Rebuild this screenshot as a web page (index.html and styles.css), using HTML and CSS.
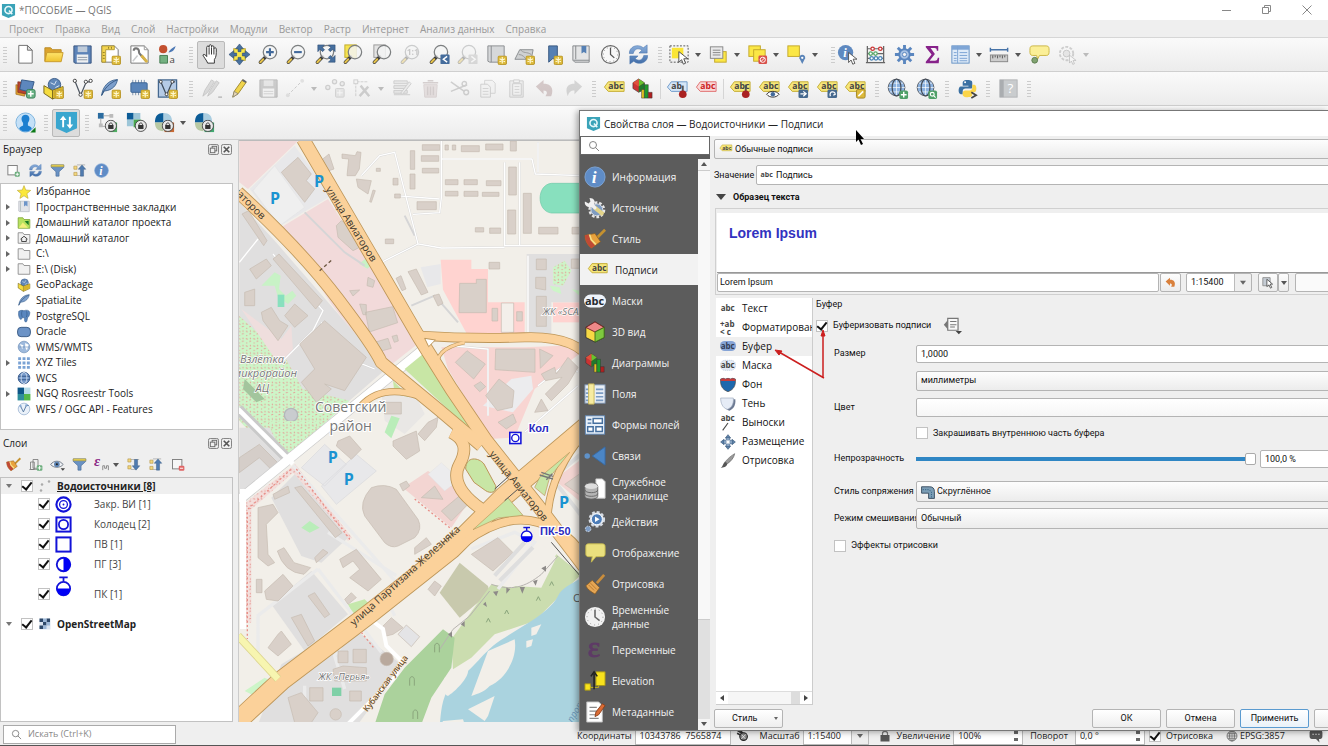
FILE: index.html
```html
<!DOCTYPE html>
<html lang="ru">
<head>
<meta charset="utf-8">
<title>*ПОСОБИЕ — QGIS</title>
<link rel="stylesheet" href="styles.css">
</head>
<body>
<svg class="paints" aria-hidden="true">
  <defs>
    <linearGradient id="blueG" x1="0" y1="0" x2="0" y2="1"><stop offset="0" stop-color="#8cb0dd"/><stop offset="1" stop-color="#3f6ba6"/></linearGradient>
    <linearGradient id="yelG" x1="0" y1="0" x2="0" y2="1"><stop offset="0" stop-color="#ffe46b"/><stop offset="1" stop-color="#eec22f"/></linearGradient>
    <pattern id="dots" width="22" height="22" patternUnits="userSpaceOnUse"><path d="M2 4l5 3M12 14l5-2M14 2l2 4M3 17l3 2" stroke="#e59a94" stroke-width="3"/></pattern>
  </defs>
</svg>
<svg class="sprite" aria-hidden="true">
  <symbol id="b-new" viewBox="0 0 10 10"><rect x=".5" y=".5" width="9" height="9" rx="1.5" fill="#dcb93a" stroke="#b8952a"/><path d="M5 1.700v6.600M2.200 3.400l5.600 3.200M7.800 3.400L2.200 6.600" stroke="#fff8cf" stroke-width="1.200"/></symbol>
  <symbol id="mag" viewBox="0 0 24 24"><path d="M9 14.500L3.500 20" stroke="#3c3c3c" stroke-width="3.600" stroke-linecap="round"/><path d="M6.500 17L3.500 20" stroke="#e5c24b" stroke-width="2.200" stroke-linecap="round"/><circle cx="13.500" cy="9.500" r="7" fill="#f3f4f4" fill-opacity=".85" stroke="#7c7f80" stroke-width="1.300"/></symbol>
  <symbol id="q" viewBox="0 0 16 16"><path d="M1 1h14v12l-7 3-7-3z" fill="#3aa3b8"/><circle cx="8" cy="7.500" r="3.800" fill="none" stroke="#e8f8fa" stroke-width="1.700"/><path d="M8.500 8l3.500 4" stroke="#e8f8fa" stroke-width="1.700"/></symbol>
  <symbol id="t-new" viewBox="0 0 24 24"><path d="M5 2.500h9l5 5V21H5z" fill="#fff" stroke="#707070"/><path d="M14 2.500v5h5z" fill="#ddd" stroke="#707070"/></symbol>
  <symbol id="t-open" viewBox="0 0 24 24"><path d="M3 19V5h6l2 2h9v3" fill="#dca32d" stroke="#b98a27"/><path d="M3 19.500L5 10h17l-2 9.500z" fill="url(#yelG)" stroke="#c99b2e"/></symbol>
  <symbol id="t-save" viewBox="0 0 24 24"><path d="M3 3h18v18H4l-1-1z" fill="#5c83b8" stroke="#38557e"/><path d="M7 3.500h10v6H7z" fill="#bfcbd9"/><path d="M6 12h12v8.500H6z" fill="#eef0f2"/><path d="M7 15h10M7 17.500h10" stroke="#8a96a6"/></symbol>
  <symbol id="t-layout" viewBox="0 0 24 24"><path d="M3 3h13l4 4v13H3z" fill="#fff" stroke="#777"/><path d="M3 3h13v4H7v13H3z" fill="#f3d451" stroke="#a58c24" stroke-width=".8"/><path d="M10 4v2M13 4v2M4 10h2M4 13h2M4 16h2" stroke="#7a6816" stroke-width=".8"/><use href="#b-new" x="13" y="13" width="10" height="10"/></symbol>
  <symbol id="t-manager" viewBox="0 0 24 24"><path d="M3 3h14l4 4v14H3z" fill="#fff" stroke="#777"/><path d="M17 3v4h4" fill="none" stroke="#999"/><path d="M6 8c0-3 4-3 5-1 1 2 0 3 1 4l7 8" fill="none" stroke="#777" stroke-width="2.200"/><path d="M14 13l6 7" stroke="#d8b347" stroke-width="3"/><path d="M5 19l5-6" stroke="#c9cbcd" stroke-width="1.500"/></symbol>
  <symbol id="t-style" viewBox="0 0 24 24"><circle cx="7.500" cy="6.500" r="4.300" fill="#c3502f"/><path d="M13 10c1-3 4-5 7.500-7-1 4-3 6-7.500 7z" fill="#4d79b5"/><path d="M4 13h8v8H4z" fill="#74b181" stroke="#477d53"/><text x="14" y="21" font-size="10" font-family="Open Sans" fill="#444">a</text></symbol>
  <symbol id="t-hand" viewBox="0 0 24 24"><path d="M8 21c-1-3-4-6-5-8.500 1-1.500 3 0 4 1.700V4.500c0-1.800 2.400-1.800 2.500 0V3c.2-1.700 2.300-1.700 2.500 0v1c.3-1.500 2.400-1.500 2.500 0v2c.4-1.500 2.500-1.300 2.500.3 0 5 .2 8-2 11v3.700z" fill="#fff" stroke="#333"/><path d="M9.500 5v7M12 4.500V12M14.500 6v6" stroke="#333" fill="none"/></symbol>
  <symbol id="t-pansel" viewBox="0 0 24 24"><rect x="6" y="6" width="12" height="12" fill="#f7e54b" stroke="#b9a22c"/><path d="M12 1l4 5h-2.500v3h-3V6H8zM12 23l4-5h-2.500v-3h-3v3H8zM1 12l5-4v2.500h3v3H6V16zM23 12l-5-4v2.500h-3v3h3V16z" fill="#47719f" stroke="#2c4a70" stroke-width=".6"/></symbol>
  <symbol id="t-zin" viewBox="0 0 24 24"><use href="#mag" width="24" height="24"/><path d="M13.500 5.500v8M9.500 9.500h8" stroke="#41699b" stroke-width="2.200"/></symbol>
  <symbol id="t-zout" viewBox="0 0 24 24"><use href="#mag" width="24" height="24"/><path d="M9.500 9.500h8" stroke="#41699b" stroke-width="2.200"/></symbol>
  <symbol id="t-zfull" viewBox="0 0 24 24"><use href="#mag" width="24" height="24"/><path d="M4 2h7L8.500 4.500l2.500 2.500L9 9 6.500 6.500 4 9zM22 2h-7l2.500 2.500L15 7l2 2 2.500-2.500L22 9zM22 20h-7l2.500-2.500L15 15l2-2 2.500 2.500L22 13z" fill="#466f9f" stroke="#2e4b70" stroke-width=".6"/></symbol>
  <symbol id="t-zsel" viewBox="0 0 24 24"><rect x="3" y="2" width="12" height="13" fill="#f5e34f" stroke="#c0ab2c"/><use href="#mag" width="24" height="24"/></symbol>
  <symbol id="t-zlayer" viewBox="0 0 24 24"><rect x="3" y="2" width="12" height="13" fill="#e3e3e3" stroke="#999"/><use href="#mag" width="24" height="24"/></symbol>
  <symbol id="t-znat" viewBox="0 0 24 24"><use href="#mag" width="24" height="24"/><text x="8" y="13" font-size="9" font-weight="700" font-family="Open Sans" fill="#777">1:1</text></symbol>
  <symbol id="t-zlast" viewBox="0 0 24 24"><use href="#mag" width="24" height="24"/><rect x="13" y="12" width="9.500" height="10" rx="1" fill="#446c9c"/><path d="M20 14l-4 3 4 3" stroke="#fff" fill="none" stroke-width="1.500"/></symbol>
  <symbol id="t-znext" viewBox="0 0 24 24"><use href="#mag" width="24" height="24"/><rect x="13" y="12" width="9.500" height="10" rx="1" fill="#aaa"/><path d="M16 14l4 3-4 3" stroke="#fff" fill="none" stroke-width="1.500"/></symbol>
  <symbol id="t-map" viewBox="0 0 24 24"><path d="M3 3h17v17H5l-2-1z" fill="#d6d8da" stroke="#8a8d90"/><path d="M6.500 3v17" stroke="#8a8d90"/><use href="#b-new" x="13" y="13" width="10" height="10"/></symbol>
  <symbol id="t-map3d" viewBox="0 0 24 24"><path d="M2 17L7 7h14l-2 10z" fill="#cfd1d2" stroke="#8a8d90"/><path d="M8 7c2 4 7 2 11 5M6 12c4 0 6 3 8 5" fill="none" stroke="#999"/><use href="#b-new" x="13" y="13" width="10" height="10"/></symbol>
  <symbol id="t-bmark" viewBox="0 0 24 24"><path d="M7 3h9v17l-4.500-4L7 20z" fill="#5580b4" stroke="#37587f"/><use href="#b-new" x="12" y="13" width="10" height="10"/></symbol>
  <symbol id="t-book" viewBox="0 0 24 24"><path d="M3 3h17v17H5l-2-2z" fill="#e4e5e6" stroke="#85888b"/><path d="M6 3v14M3.500 18H20" stroke="#85888b" fill="none"/><path d="M12 3h5v8l-2.500-1.500L12 11z" fill="#5580b4"/></symbol>
  <symbol id="t-clock" viewBox="0 0 24 24"><circle cx="12" cy="12" r="9.300" fill="#f8f8f8" stroke="#666" stroke-width="1.200"/><path d="M12 5v7l4 3.500" stroke="#555" fill="none" stroke-width="1.300"/><circle cx="12" cy="12" r="7.500" fill="none" stroke="#888" stroke-dasharray="1 2.900"/></symbol>
  <symbol id="t-refresh" viewBox="0 0 24 24"><path d="M2.500 11C2 4 11 0 17 5l4-3v8.500h-8.500L15.500 7.500c-4-3-8-1-9 3.500zM21.500 13C22 20 13 24 7 19l-4 3v-8.500h8.500L8.500 16.500c4 3 8 1 9-3.500z" fill="url(#blueG)" stroke="#4b76af" stroke-width=".6"/></symbol>
  <symbol id="cur" viewBox="0 0 12 16"><path d="M1 1v12l3-3 2 5 2.500-1-2-5H11z" fill="#fff" stroke="#444"/></symbol>
  <symbol id="t-select" viewBox="0 0 24 24"><rect x="2" y="3" width="19" height="17" fill="none" stroke="#555" stroke-dasharray="2 1.500"/><rect x="4" y="5" width="12" height="11" fill="#fae536"/><use href="#cur" x="10" y="8" width="12" height="15"/></symbol>
  <symbol id="t-form" viewBox="0 0 24 24"><rect x="8" y="9" width="12" height="11" fill="#fbe746" stroke="#c4a92c"/><rect x="3.500" y="4" width="13" height="12" fill="#e9e9ea" stroke="#888"/><path d="M6 7.500h8M6 10h8M6 12.500h8" stroke="#888"/></symbol>
  <symbol id="t-desel" viewBox="0 0 24 24"><rect x="3" y="3" width="12" height="11" fill="#fbe746" stroke="#c4a92c"/><rect x="8" y="7" width="12" height="12" fill="#fbe746" stroke="#c4a92c"/><rect x="13" y="13" width="9" height="9" rx="1.500" fill="#d8504a"/><circle cx="17.500" cy="17.500" r="2.700" fill="none" stroke="#fff"/><path d="M15.500 19.500l4-4" stroke="#fff"/></symbol>
  <symbol id="t-selloc" viewBox="0 0 24 24"><rect x="3" y="3" width="12" height="11" fill="#fbe746" stroke="#c4a92c"/><path d="M18 22l-3-6c-1-5 7-5 6 0z" fill="#5a84b8"/><circle cx="18" cy="15.500" r="1.200" fill="#fff"/></symbol>
  <symbol id="t-info" viewBox="0 0 24 24"><circle cx="10" cy="10" r="8" fill="#5e89c0"/><text x="7.500" y="15" font-size="13" font-weight="700" font-style="italic" font-family="Liberation Serif" fill="#fff">i</text><use href="#cur" x="12" y="9" width="11" height="14"/></symbol>
  <symbol id="t-abacus" viewBox="0 0 24 24"><path d="M3.500 3v18M20.500 3v18M2 20.500h20M3 6h18M3 11h18M3 16h18" stroke="#666" stroke-width="1.300"/><g fill="#fff" stroke-width="1.300"><g stroke="#cc3333"><circle cx="9" cy="6" r="1.800"/><circle cx="17" cy="6" r="1.800"/></g><g stroke="#55a868"><circle cx="7" cy="11" r="1.800"/><circle cx="12" cy="11" r="1.800"/></g><g stroke="#4a86b8"><circle cx="8" cy="16" r="1.800"/><circle cx="12.500" cy="16" r="1.800"/><circle cx="17" cy="16" r="1.800"/></g></g></symbol>
  <symbol id="t-gear" viewBox="0 0 24 24"><path d="M12 2v20M2 12h20M5 5l14 14M19 5L5 19" stroke="#5a86bf" stroke-width="3"/><circle cx="12" cy="12" r="5.500" fill="#a9c3e5" stroke="#5a86bf" stroke-width="2"/><circle cx="12" cy="12" r="2.200" fill="#f4f4f4" stroke="#5a86bf"/></symbol>
  <symbol id="t-sum" viewBox="0 0 24 24"><path d="M5 3h13v5h-1.500c0-2-.8-2.700-2.500-2.700h-4l4.500 6.200-5.500 7h5.500c2 0 2.700-1 3-3H19L18.500 21H5v-1.500L11 12 5 4.500z" fill="#87228a"/></symbol>
  <symbol id="t-table" viewBox="0 0 24 24"><rect x="3" y="3" width="18" height="18" fill="#dfebf8" stroke="#6490c4"/><path d="M3 3h18v4H3z" fill="#7fa6d6"/><path d="M9 3v18M5 10h3M5 13h3M5 16h3M11 10h8M11 13h8M11 16h8M5 18.500h3M11 18.500h8" stroke="#7ba3d3"/></symbol>
  <symbol id="t-measure" viewBox="0 0 24 24"><path d="M2 7h19M2.500 5v4M20.500 5v4" stroke="#4773a8" stroke-width="1.500"/><rect x="2.500" y="12.500" width="18" height="7" fill="#cdcdcd" stroke="#888"/><path d="M5 13v3M7.500 13v2M10 13v3M12.500 13v2M15 13v3M17.500 13v2" stroke="#555"/></symbol>
  <symbol id="t-tip" viewBox="0 0 24 24"><path d="M5 3h14c3 0 3 2 3 5s0 5-3 5h-7l-2 4-1-4H5c-3 0-3-2-3-5s0-5 3-5z" fill="#fbef97" stroke="#cbb645"/><circle cx="7" cy="18" r="3" fill="#81a371" stroke="#5d7c4f"/></symbol>
  <symbol id="t-ghost" viewBox="0 0 24 24"><circle cx="11" cy="11" r="7" fill="none" stroke="#888" stroke-width="2" stroke-dasharray="3 1.500"/><circle cx="11" cy="11" r="3.500" fill="#ccc" stroke="#777"/><use href="#cur" x="13" y="12" width="9" height="11"/></symbol>
  <symbol id="u-add" viewBox="0 0 24 24"><path d="M2 8l11 2-2 10-9-2z" fill="#e0a030" stroke="#9a6a20" stroke-width=".7"/><path d="M4 5l11 1-1 12L4 16z" fill="#b8442f" stroke="#7c2d1e" stroke-width=".7"/><path d="M8 3l13 2-3 11-12-3z" fill="#5d87bd" stroke="#345987"/><rect x="13" y="13" width="9" height="9" rx="2" fill="#6cb487" stroke="#3c8159"/><path d="M17.500 14.500v6M14.500 17.500h6" stroke="#fff" stroke-width="1.500"/></symbol>
  <symbol id="u-gpkg" viewBox="0 0 24 24"><circle cx="13" cy="8" r="6.500" fill="#6087b8" stroke="#3e5f8b"/><path d="M9 6l4 2 2-4M14 11l4-2" stroke="#dce8f5" fill="none"/><path d="M2 9l9 5 11-4v8l-11 5-9-6z" fill="#f5dc3f" stroke="#75651c"/><path d="M11 14v9" stroke="#75651c"/><path d="M11.500 14l10-3.500v7l-10 4.500z" fill="#d8b52f"/></symbol>
  <symbol id="u-gpkgn" viewBox="0 0 24 24"><use href="#u-gpkg" width="24" height="24"/><use href="#b-new" x="13" y="13" width="10" height="10"/></symbol>
  <symbol id="u-v" viewBox="0 0 24 24"><path d="M4 4l6 15 6-14h4" stroke="#4c5560" fill="none" stroke-width="1.300"/><g fill="#fff" stroke="#444"><circle cx="4" cy="4" r="1.700"/><circle cx="10" cy="18.500" r="1.700"/><circle cx="15.500" cy="5" r="1.700"/><circle cx="20.500" cy="4" r="1.700"/></g><use href="#b-new" x="13" y="13" width="10" height="10"/></symbol>
  <symbol id="feather" viewBox="0 0 24 24"><path d="M3 21c1-10 8-18 18-18-1 6-5 12-15 13z" fill="#7d9fcb" stroke="#3e648f"/><path d="M3 21C6 13 12 7 21 3" stroke="#31557f" fill="none"/></symbol>
  <symbol id="u-feather" viewBox="0 0 24 24"><use href="#feather" width="22" height="22"/><use href="#b-new" x="13" y="13" width="10" height="10"/></symbol>
  <symbol id="u-chip" viewBox="0 0 24 24"><path d="M5 3v16M8 3v16M11 3v16M14 3v16M17 3v16" stroke="#7d93ae"/><rect x="3" y="6" width="17" height="10" rx="1" fill="#5984b9" stroke="#3e6594"/><use href="#b-new" x="13" y="13" width="10" height="10"/></symbol>
  <symbol id="u-vbox" viewBox="0 0 24 24"><rect x="2.500" y="3" width="19" height="18" fill="#b5cbe6" stroke="#45688f" stroke-width="1.300"/><path d="M5 5l6 14 6-14h3" stroke="#3c4a5a" fill="none" stroke-width="1.300"/><g fill="#fff" stroke="#444"><circle cx="5" cy="5" r="1.500"/><circle cx="11" cy="18" r="1.500"/><circle cx="17" cy="5" r="1.500"/></g><use href="#b-new" x="13" y="13" width="10" height="10"/></symbol>
  <symbol id="u-pencils" viewBox="0 0 24 24"><path d="M3 20l2-6L12 3l3 2-7 11zM8 20l2-5 7-11 3 2-7 10z" fill="#aaa" stroke="#777"/><path d="M19 21h4" stroke="#555" stroke-width="1.500"/></symbol>
  <symbol id="u-pencil" viewBox="0 0 24 24"><path d="M5 21l1.500-6L15 3l4 2.500-8.500 12z" fill="#f0d44c" stroke="#a18a2a"/><path d="M5 21l1.500-6 4 2.500z" fill="#e9d7b3" stroke="#777" stroke-width=".7"/><path d="M15 3l4 2.500" stroke="#666" stroke-width="2"/></symbol>
  <symbol id="u-line" viewBox="0 0 24 24"><path d="M4 19L19 4" stroke="#777" stroke-dasharray="3 2"/><circle cx="4" cy="19" r="2" fill="#bbb"/><circle cx="19" cy="4" r="2" fill="#bbb"/></symbol>
  <symbol id="u-points" viewBox="0 0 24 24"><g fill="#ddd" stroke="#888" stroke-width="1.300"><circle cx="4" cy="11" r="2.200"/><circle cx="11" cy="5" r="2.200"/><circle cx="19" cy="7" r="2.200"/></g><rect x="12" y="12" width="9" height="9" rx="1" fill="#ccc" stroke="#999"/><path d="M16.500 13.500v6M13.500 16.500h6" stroke="#fff"/></symbol>
  <symbol id="u-vertex" viewBox="0 0 24 24"><path d="M5 20V5h12" stroke="#888" fill="none" stroke-dasharray="3 1"/><rect x="3" y="3" width="4" height="4" fill="#eee" stroke="#888"/><path d="M9 20l9-10M10 9l9 11" stroke="#888" stroke-width="2.500"/></symbol>
  <symbol id="u-tedit" viewBox="0 0 24 24"><path d="M3 4h14v3H3zM3 9h14v3H3zM3 14h14v3H3zM3 18.500h17" fill="#ccc" stroke="#888"/><path d="M10 17L19 5l2 2-9 11z" fill="#ddd" stroke="#888"/></symbol>
  <symbol id="u-trash" viewBox="0 0 24 24"><path d="M5 8h14l-1 13H6z" fill="#cbb" stroke="#a99"/><path d="M4 6h16M9 4h6M9 10v9M12 10v9M15 10v9" stroke="#988" stroke-width="1.500"/></symbol>
  <symbol id="u-cut" viewBox="0 0 24 24"><path d="M3 5l14 10M3 15l17-7" stroke="#888" stroke-width="1.600"/><circle cx="19" cy="16" r="2.500" fill="none" stroke="#888" stroke-width="1.500"/><circle cx="17" cy="7" r="2.300" fill="none" stroke="#888" stroke-width="1.500"/></symbol>
  <symbol id="u-copy" viewBox="0 0 24 24"><path d="M9 3.500h8l3 3V17H9z" fill="#eee" stroke="#999"/><path d="M5 7.500h7l3 3V21H5z" fill="#eee" stroke="#888"/><path d="M7 12h6M7 15h6M7 18h6" stroke="#999"/></symbol>
  <symbol id="u-paste" viewBox="0 0 24 24"><path d="M5 4h14v17H5z" fill="#ddd" stroke="#888"/><path d="M8 7h9v12H8zM9 3h6v3H9z" fill="#eee" stroke="#888"/><path d="M10 10h5M10 13h5M10 16h5" stroke="#999"/></symbol>
  <symbol id="undo" viewBox="0 0 24 24"><path d="M3 10l8-7v4c8 0 11 5 8 13h-6c3-4 1-6-2-6v4z" fill="currentColor"/></symbol>
  <symbol id="u-redo" viewBox="0 0 24 24"><path d="M21 10l-8-7v4C5 7 3 12 6 20c1-4 3-6 7-6v4z" fill="#999"/></symbol>
  <symbol id="tag" viewBox="0 0 24 24"><path d="M1.500 10.500L5.500 5H22v10H5.500z" fill="#f6e77a" stroke="#c4ac35"/><text x="5.500" y="13" font-size="9" font-weight="700" font-family="Open Sans" fill="#444">abc</text></symbol>
  <symbol id="u-tagblue" viewBox="0 0 24 24"><path d="M1.500 10.500L5.500 5H22v10H5.500z" fill="#d5e6f8" stroke="#6f9bcb"/><text x="5.500" y="13" font-size="9" font-weight="700" font-family="Open Sans" fill="#444">ab</text><path d="M17.500 9v6" stroke="#555" stroke-width="2"/><circle cx="17.500" cy="18" r="4" fill="#aa2222"/></symbol>
  <symbol id="u-tagred" viewBox="0 0 24 24"><path d="M1.500 10.500L5.500 5H22v10H5.500z" fill="#f9d8d8" stroke="#e07070"/><text x="5.500" y="13" font-size="9" font-weight="700" font-family="Open Sans" fill="#cc2222">abc</text></symbol>
  <symbol id="u-tagpin" viewBox="0 0 24 24"><use href="#tag" width="24" height="24"/><path d="M17.500 8v7" stroke="#555" stroke-width="2"/><circle cx="17.500" cy="18" r="4" fill="#aa2222"/></symbol>
  <symbol id="u-tageye" viewBox="0 0 24 24"><use href="#tag" width="24" height="24"/><path d="M9 18c3-4 10-4 13 0-3 4-10 4-13 0z" fill="#fff" stroke="#333"/><circle cx="15.500" cy="18" r="2.300" fill="#446c9c"/></symbol>
  <symbol id="u-tagmove" viewBox="0 0 24 24"><use href="#tag" width="24" height="24"/><rect x="12" y="13" width="10" height="9" rx="1.500" fill="#476a8f"/><path d="M14 17.500h5M17 15l3 2.500-3 2.500" stroke="#fff" stroke-width="1.300" fill="none"/></symbol>
  <symbol id="u-tagrot" viewBox="0 0 24 24"><use href="#tag" width="24" height="24"/><rect x="12" y="13" width="10" height="9" rx="1.500" fill="#476a8f"/><path d="M15 20c-2-5 5-6 5-2l-2 1" stroke="#fff" stroke-width="1.300" fill="none"/></symbol>
  <symbol id="u-tagedit" viewBox="0 0 24 24"><use href="#tag" width="24" height="24"/><rect x="13" y="13" width="9" height="9" rx="1.500" fill="#dcb93a" stroke="#a48826"/><path d="M15 20l5-5" stroke="#fff" stroke-width="1.600"/></symbol>
  <symbol id="diag" viewBox="0 0 24 24"><path d="M2 6l6-4 6 4v7l-6 3-6-4z" fill="#cc3333" stroke="#333" stroke-width=".6"/><path d="M8 2l6 4-6 4z" fill="#66c42e"/><path d="M2 6l6-4v8z" fill="#e0503c"/><path d="M8 10l6-4v7l-6 3z" fill="#207a2c"/><path d="M11 13h3v9h-3z" fill="#e0c020" stroke="#333" stroke-width=".5"/><path d="M14 8h4v14h-4z" fill="#209a2c" stroke="#333" stroke-width=".5"/><path d="M18 16h4v6h-4z" fill="#b02020" stroke="#333" stroke-width=".5"/></symbol>
  <symbol id="globe" viewBox="0 0 24 24"><circle cx="12" cy="12" r="9.500" fill="#8cb2e0" stroke="#50565e"/><path d="M12 2.500v19M2.500 12h19M4.500 7h15M4.500 17h15" stroke="#fff" fill="none" stroke-width=".8"/><ellipse cx="12" cy="12" rx="5" ry="9.500" fill="none" stroke="#444b55" stroke-width="1.400"/></symbol>
  <symbol id="u-globeadd" viewBox="0 0 24 24"><use href="#globe" width="22" height="22"/><rect x="14" y="14" width="9" height="9" rx="2" fill="#4f9f67"/><path d="M18.500 15.500v6M15.500 18.500h6" stroke="#fff" stroke-width="1.500"/></symbol>
  <symbol id="u-globefind" viewBox="0 0 24 24"><use href="#globe" width="22" height="22"/><rect x="14" y="14" width="9" height="9" rx="2" fill="#4f9f67"/><circle cx="18" cy="18" r="2" fill="none" stroke="#fff" stroke-width="1.200"/><path d="M19.500 19.500l2 2" stroke="#fff" stroke-width="1.200"/></symbol>
  <symbol id="u-py" viewBox="0 0 24 24"><path d="M12 3c-5 0-5 2-5 4v2h6v1H5c-3 0-3 8 0 8h2v-3c0-2 1-3 3-3h5c2 0 2-1 2-3V6c0-2-1-3-5-3z" fill="#3b70a2"/><path d="M17 8v3c0 2-1 3-3 3h-4c-2 0-3 1-3 3v2c1 2 3 2 5 2 4 0 5-1 5-3v-2h2c3 0 3-8 0-8z" fill="#fbd54a"/><circle cx="9.500" cy="5.500" r="1" fill="#fff"/><path d="M16 16l5 3-5 3" stroke="#444" fill="none" stroke-width="1.800"/></symbol>
  <symbol id="u-help" viewBox="0 0 24 24"><rect x="3" y="3" width="18" height="18" fill="#c9ccce" stroke="#b2b4b6"/><path d="M3 3h4v18H3z" fill="#aaadb0"/><text x="11" y="17" font-size="14" font-family="Open Sans" fill="#fff">?</text></symbol>
  <symbol id="w-user" viewBox="0 0 24 24"><circle cx="12" cy="12" r="10" fill="#c4e0f7" stroke="#7fb5de"/><path d="M12 4c5 0 5 6 2.500 8.500V15c2.500 1 4 2 4 3.500-3 4-10 4-13 0 0-1.500 1.500-2.500 4-3.500v-2.500C7 10 7 4 12 4z" fill="#1c7fd0"/><path d="M22.500 17v5.500H17z" fill="#0c7a18"/></symbol>
  <symbol id="w-shield" viewBox="0 0 24 24"><path d="M1 1h22v17l-11 5-11-5z" fill="#3aa6cf"/><path d="M8.500 17V7M15.500 6v10" stroke="#fff" stroke-width="2"/><path d="M5 9.500L8.500 5 12 9.500zM12 14l3.500 4.500L19 14z" fill="#fff"/></symbol>
  <symbol id="lockb" viewBox="0 0 14 14"><circle cx="7" cy="7" r="6.300" fill="#e8e8e8" stroke="#444"/><rect x="4" y="6" width="6" height="4.500" fill="#333"/><path d="M5 6c0-3 4-3 4 0" fill="none" stroke="#333"/></symbol>
  <symbol id="w-a" viewBox="0 0 24 24"><path d="M2 2h6v6H2z" fill="#2b6ca0"/><path d="M8 5h7M5 8v8h6" stroke="#aaa" fill="none"/><path d="M14 3h4v4h-4zM3 13h4v4H3z" fill="#bbb"/><path d="M14 12h8v10h-8z" fill="#4fae63"/><use href="#lockb" x="9" y="9" width="13" height="13"/></symbol>
  <symbol id="w-b" viewBox="0 0 24 24"><path d="M2 2h7v7H2z" fill="#0c5c97"/><path d="M9 2h7v7H9zM2 9h7v7H2z" fill="#9dc6d8"/><path d="M9 9h8v8H9z" fill="#4aa84e"/><use href="#lockb" x="10" y="9" width="13" height="13"/></symbol>
  <symbol id="w-c" viewBox="0 0 24 24"><path d="M2 12C2 5 5 2 11 2v10z" fill="#0c5c97"/><path d="M11 2c6 0 9 3 9 10h-9z" fill="#a9cde0"/><path d="M2 12h9v9c-6 0-9-3-9-9z" fill="#b8c9a4"/><path d="M12 12h10v10H12z" fill="#c76a35"/><use href="#lockb" x="9" y="9" width="13" height="13"/></symbol>
  <symbol id="w-d" viewBox="0 0 24 24"><path d="M2 12C2 5 5 2 11 2v10z" fill="#0c5c97"/><path d="M11 2c6 0 9 3 9 10h-9z" fill="#a9cde0"/><path d="M2 12h9v9c-6 0-9-3-9-9z" fill="#b8c9a4"/><path d="M12 12h10v10H12z" fill="#42a871"/><use href="#lockb" x="9" y="9" width="13" height="13"/></symbol>
  <symbol id="p-add" viewBox="0 0 24 24"><rect x="3" y="4" width="15" height="15" fill="#fdfdfd" stroke="#7d7d7d" stroke-width="1.500"/><rect x="14" y="14" width="8" height="8" rx="2" fill="#6cae7d"/><path d="M18 15.500v5M15.500 18h5" stroke="#fff" stroke-width="1.500"/></symbol>
  <symbol id="funnel" viewBox="0 0 24 24"><path d="M2 3h20v4l-7.500 7v7h-5v-7L2 7z" fill="#6a92c4" stroke="#466b98"/><path d="M2 3h20v3H2z" fill="#efd951" stroke="#a89440"/></symbol>
  <symbol id="p-coll" viewBox="0 0 24 24"><path d="M3 5h5v5H3zM3 15h5v5H3z" fill="#f3d77e" stroke="#b6964a"/><path d="M8 3h13M8 20h7" stroke="#999"/><path d="M16 3l6 7h-3.500v11h-5V10H10z" fill="#507baf" stroke="#34587f" stroke-width=".7"/></symbol>
  <symbol id="p-exp" viewBox="0 0 24 24"><path d="M3 3h5v5H3zM3 14h5v5H3z" fill="#f3d77e" stroke="#b6964a"/><path d="M8 4h13M8 20h7" stroke="#999"/><path d="M16 21l6-7h-3.500V4h-5v10H10z" fill="#507baf" stroke="#34587f" stroke-width=".7"/></symbol>
  <symbol id="p-info" viewBox="0 0 24 24"><circle cx="12" cy="12" r="11" fill="#5f8cc6" stroke="#7ea5d6"/><text x="8.500" y="18.500" font-size="19" font-weight="700" font-style="italic" font-family="Liberation Serif" fill="#fff">i</text></symbol>
  <symbol id="star" viewBox="0 0 24 24"><path d="M12 1l3 7.500 8.500.8-6.500 5.500 2 8.200-7-4.500-7 4.500 2-8.200L.5 9.300 9 8.500z" fill="#fbe83c" stroke="#b7a42f"/></symbol>
  <symbol id="folder" viewBox="0 0 24 24"><path d="M2 21V3h8l2 3h10v15z" fill="#f1f1f1" stroke="#8b8b8b" stroke-width="1.500"/></symbol>
  <symbol id="f-proj" viewBox="0 0 24 24"><path d="M2 21V3h8l2 3h10v15z" fill="#b7e25f" stroke="#7ba12e" stroke-width="1.300"/><path d="M3 20l7-9 9 9z" fill="#f4ef7c"/><path d="M13 9l7-1v8z" fill="#197a26"/></symbol>
  <symbol id="f-home" viewBox="0 0 24 24"><path d="M2 21V3h8l2 3h10v15z" fill="#f1f1f1" stroke="#8b8b8b" stroke-width="1.500"/><path d="M6 14l6-5 6 5M8 13v5h8v-5" stroke="#333" fill="none" stroke-width="1.500"/></symbol>
  <symbol id="f-book" viewBox="0 0 24 24"><path d="M3 2h18v18H5l-2-1z" fill="#e2e4e8" stroke="#abb0b8"/><path d="M6 2v17" stroke="#9aa"/><path d="M12 2h6v9l-3-2-3 2z" fill="#6d95c8"/></symbol>
  <symbol id="f-pg" viewBox="0 0 24 24"><path d="M3 4c4-3 8-1 9-1 4-2 9-1 10 3 0 5-3 9-4 9l-1 6c-1 2-4 1-4-1v-5H9l-2 3c-4-1-5-9-4-14z" fill="#5a87bf" stroke="#38608f"/><path d="M9 3c-2 4-1 8 0 11M16 4c2 3 1 7 0 10" stroke="#2f5480" fill="none"/></symbol>
  <symbol id="f-ora" viewBox="0 0 24 24"><rect x="1" y="4" width="22" height="16" rx="6" fill="#6c93c6" stroke="#33557f" stroke-width="1.500"/></symbol>
  <symbol id="f-wms" viewBox="0 0 24 24"><circle cx="12" cy="12" r="10" fill="#9db9dc" stroke="#5f83b0"/><path d="M5 7l6 2-2 7zM14 5l6 3-3 10-3-5z" fill="#fff"/><path d="M4 12h16" stroke="#5f83b0"/></symbol>
  <symbol id="f-xyz" viewBox="0 0 24 24"><path d="M2 2h5v5H2zM9.500 2h5v5h-5zM17 2h5v5h-5zM2 9.500h5v5H2zM9.500 9.500h5v5h-5zM17 9.500h5v5h-5zM2 17h5v5H2zM9.500 17h5v5h-5zM17 17h5v5h-5z" fill="#7aa2d4"/></symbol>
  <symbol id="f-wcs" viewBox="0 0 24 24"><circle cx="12" cy="12" r="10" fill="#7a9dcc" stroke="#36588a" stroke-width="1.500"/><path d="M2 9h20M2 15h20" stroke="#36588a" stroke-width="2"/><ellipse cx="12" cy="12" rx="5" ry="10" fill="none" stroke="#e6eef8" stroke-width="1.300"/></symbol>
  <symbol id="f-ngq" viewBox="0 0 24 24"><path d="M1 1h11v11H1z" fill="#0e5687"/><path d="M12 1h11v11H12z" fill="#b5dbe8"/><path d="M1 12h11v11H1z" fill="#2e8e9b"/><path d="M12 12h11v11H12z" fill="#54b948"/></symbol>
  <symbol id="f-wfs" viewBox="0 0 24 24"><circle cx="12" cy="12" r="10" fill="#eaf1f9" stroke="#7d9dc4"/><path d="M6 7l5 10 5-11h4" stroke="#4e7199" stroke-width="1.500" fill="none"/><circle cx="6" cy="7" r="2" fill="#86a9d3"/><circle cx="16" cy="6" r="2" fill="#86a9d3"/></symbol>
  <symbol id="brush" viewBox="0 0 24 24"><path d="M23 2l-9 9" stroke="#c5912f" stroke-width="3"/><path d="M1 8l11-2 6 9-10 7C4 19 1 14 1 8z" fill="#e9a23c" stroke="#8c5c20" stroke-width=".8"/><path d="M1 8l5-1 1 6 5 6-4 3C4 19 1 14 1 8z" fill="#c04a35"/><path d="M6 7l2 6 5 5" stroke="#f7e08a" fill="none" stroke-width="1.800"/></symbol>
  <symbol id="l-group" viewBox="0 0 24 24"><path d="M4 8h6v12H4zM8 4h8v14H8z" fill="#eee" stroke="#777" stroke-width="1.300"/><path d="M2 20h14" stroke="#777"/><rect x="14" y="13" width="9" height="9" rx="2" fill="#6cae7d"/><path d="M18.500 14.500v6M15.500 17.500h6" stroke="#fff" stroke-width="1.500"/></symbol>
  <symbol id="l-eye" viewBox="0 0 24 24"><path d="M1 12C6 5 16 5 21 12 16 18 6 18 1 12z" fill="#eef1f5" stroke="#5d6875" stroke-width="1.300"/><circle cx="11" cy="11.500" r="4.500" fill="#5d84b4"/><circle cx="11" cy="11.500" r="1.700" fill="#222"/><path d="M17 18h7l-3.500 4z" fill="#444"/></symbol>
  <symbol id="l-eps" viewBox="0 0 24 24"><text x="0" y="15" font-size="24" font-weight="700" font-style="italic" font-family="Liberation Serif" fill="#8c2a86">ε</text><path d="M14 21v-7h3v4h3v-4h3v7" stroke="#888" stroke-width="1.500" fill="none"/></symbol>
  <symbol id="l-rem" viewBox="0 0 24 24"><rect x="4" y="4" width="15" height="15" fill="#f6f6f6" stroke="#7d7d7d" stroke-width="1.500"/><rect x="14" y="14" width="9" height="8" rx="2" fill="#e06666"/><path d="M16 18h5" stroke="#fff" stroke-width="1.500"/></symbol>
  <symbol id="l-points" viewBox="0 0 24 24"><g fill="#aaa"><circle cx="6" cy="9" r="2.500"/><circle cx="20" cy="3" r="2.500"/><circle cx="4" cy="21" r="2.500"/></g></symbol>
  <symbol id="l-raster" viewBox="0 0 24 24"><path d="M1 1h22v22H1z" fill="#dbe4ef"/><path d="M1 1h7v7H1zM15 1h7v7h-7zM8 8h7v7H8zM1 15h7v7H1z" fill="#2d4768"/><path d="M8 1h7v7H8zM15 8h7v7h-7zM8 15h7v7H8z" fill="#9db8d8"/></symbol>
  <symbol id="s-zak" viewBox="0 0 24 24"><circle cx="12" cy="12" r="10" fill="none" stroke="#1212d8" stroke-width="3"/><circle cx="12" cy="12" r="5.500" fill="none" stroke="#1212d8" stroke-width="1.800"/><circle cx="12" cy="12" r="1.300" fill="#1212d8"/></symbol>
  <symbol id="s-kol" viewBox="0 0 24 24"><rect x="2" y="2" width="20" height="20" fill="#fff" stroke="#1212d8" stroke-width="2.800"/><circle cx="12" cy="12" r="6.500" fill="none" stroke="#1212d8" stroke-width="2.500"/></symbol>
  <symbol id="s-pv" viewBox="0 0 24 24"><rect x="2" y="2" width="20" height="20" fill="#fff" stroke="#1212d8" stroke-width="2.800"/></symbol>
  <symbol id="s-pg" viewBox="0 0 24 24"><circle cx="12" cy="12" r="9.500" fill="#fff" stroke="#1212d8" stroke-width="2.600"/><path d="M12 2a10 10 0 0 1 0 20z" fill="#0000f5"/></symbol>
  <symbol id="s-pk" viewBox="0 0 24 30"><path d="M6 2h12M12 2v6" stroke="#1212d8" stroke-width="2.500"/><circle cx="12" cy="18" r="9.500" fill="#fff" stroke="#1212d8" stroke-width="2.500"/><path d="M2 18h20a10 10 0 0 1-20 0z" fill="#0000f5"/></symbol>
  <symbol id="search" viewBox="0 0 24 24"><circle cx="10" cy="10" r="7" fill="none" stroke="#777" stroke-width="1.800"/><path d="M15 15l7 7" stroke="#777" stroke-width="1.800"/></symbol>
  <symbol id="d-src" viewBox="0 0 24 24"><circle cx="14" cy="14" r="8" fill="none" stroke="#e8e8e8" stroke-width="2.500" stroke-dasharray="3 2"/><circle cx="14" cy="14" r="6.500" fill="#7f9cc2" stroke="#dfe5ee"/><path d="M11 11l10 8" stroke="#e3d489" stroke-width="4.500"/><path d="M1 5l4 2 2-2-1-4c5 0 7 4 5 7l3 4-2 2-4-3C4 12 0 9 1 5z" fill="#f0f0f0"/></symbol>
  <symbol id="d-mask" viewBox="0 0 24 24"><rect x="0" y="5" width="24" height="14" rx="7" fill="#eef3fa"/><text x="1" y="16" font-size="12" font-weight="700" font-family="Open Sans" fill="#262a30">abc</text></symbol>
  <symbol id="d-cube" viewBox="0 0 24 24"><path d="M12 1l10 6v11l-10 5-10-5V7z" fill="#f7d944" stroke="#333"/><path d="M12 1l10 6-10 5L2 7z" fill="#ee8888" stroke="#742222"/><path d="M12 12l10-5v11l-10 5z" fill="#7ec93e" stroke="#3c6c1a"/></symbol>
  <symbol id="d-fields" viewBox="0 0 24 24"><rect x="1" y="2" width="22" height="20" fill="#e8eef6" stroke="#7a92b0"/><path d="M2 7h3M2 11h3M2 15h3M2 19h3M13 7h8M13 11h8M13 15h8M13 19h8" stroke="#7b9cc4" stroke-width="1.800"/><path d="M5 1h6v22H5z" fill="#f6eba1" stroke="#c8b65a"/></symbol>
  <symbol id="d-forms" viewBox="0 0 24 24"><rect x="1.500" y="2" width="21" height="20" fill="#e8f0f9" stroke="#6289b7"/><path d="M4 6h4M4 10h4" stroke="#456f9f" stroke-width="1.500"/><path d="M10 5h10v5H10zM4 14h6v5H4zM13 14h7v5h-7z" fill="#fff" stroke="#456f9f" stroke-width="1.600"/></symbol>
  <symbol id="d-join" viewBox="0 0 24 24"><circle cx="3.500" cy="12" r="3" fill="#5f92c9"/><path d="M23 2v20L9 12z" fill="#4b86c6" stroke="#3769a3"/></symbol>
  <symbol id="d-store" viewBox="0 0 24 24"><path d="M13 1h7l3 3v18h-10z" fill="#fff" stroke="#ccc"/><path d="M1 9c0-5 14-5 14 0v11c0 4-14 4-14 0z" fill="#b4b4b4" stroke="#666"/><path d="M1 13c0 4 14 4 14 0M1 17c0 4 14 4 14 0" stroke="#666" fill="none"/><ellipse cx="8" cy="9" rx="7" ry="3" fill="#ddd"/></symbol>
  <symbol id="d-act" viewBox="0 0 24 24"><circle cx="14" cy="9" r="7.500" fill="#e9eef5" stroke="#d8dde4" stroke-width="3" stroke-dasharray="3 2"/><circle cx="14" cy="9" r="6" fill="#4d7db8" stroke="#fff"/><path d="M12 6l5 3-5 3z" fill="#fff"/><circle cx="4.500" cy="19.500" r="3" fill="#7d9cc5" stroke="#cfd9e6" stroke-dasharray="2 1"/></symbol>
  <symbol id="d-tip" viewBox="0 0 24 24"><path d="M5 2h15c2 0 3 1 3 3v8c0 2-1 3-3 3h-7l-5 6 1-6H5c-2 0-3-1-3-3V5c0-2 1-3 3-3z" fill="#eae07e" stroke="#c5b94f"/></symbol>
  <symbol id="d-rend" viewBox="0 0 24 24"><path d="M22 2l-8 9" stroke="#c98d3c" stroke-width="3"/><path d="M9 8l8 8-5 7C7 20 4 18 2 14z" fill="#e5a654" stroke="#8c5c20" stroke-width=".8"/><path d="M5 13l6 6M7 11l7 7" stroke="#b87a2f"/></symbol>
  <symbol id="d-clock" viewBox="0 0 24 24"><circle cx="12" cy="12" r="11" fill="#f2f2f2"/><path d="M12 4v8l5 4" stroke="#666" stroke-width="1.700" fill="none"/><circle cx="12" cy="12" r="8.700" fill="none" stroke="#888" stroke-dasharray="1 3.500"/></symbol>
  <symbol id="d-eps" viewBox="0 0 24 24"><text x="4" y="20" font-size="32" font-family="Liberation Serif" fill="#5e3a66" stroke="#5e3a66">ε</text></symbol>
  <symbol id="d-elev" viewBox="0 0 24 24"><path d="M1 15h6v7H1zM13 2h10v15H13z" fill="#f8e21c" stroke="#a2921a"/><path d="M7 17v2h9v-2" fill="none" stroke="#c8b61c"/><path d="M11 21V4M7.500 7L11 2l3.500 5" stroke="#222" stroke-width="1.700" fill="none"/></symbol>
  <symbol id="d-meta" viewBox="0 0 24 24"><path d="M3 1h13l4 4v18H3z" fill="#fff" stroke="#bbb"/><path d="M6 7h8M6 11h10M6 15h9M6 19h10" stroke="#888" stroke-width="1.200"/><path d="M12 17l1-5 7-9 3 2-7 10z" fill="#da6b34" stroke="#8c3f1a"/></symbol>
  <symbol id="c-abc" viewBox="0 0 24 24"><text x="1" y="15" font-size="12" font-weight="700" font-family="Open Sans" fill="#444">abc</text></symbol>
  <symbol id="c-fmt" viewBox="0 0 24 24"><text x="0" y="10" font-size="12" font-weight="700" font-family="Open Sans" fill="#444">+ab</text><text x="0" y="22" font-size="12" font-weight="700" font-family="Open Sans" fill="#444">&lt; c</text></symbol>
  <symbol id="c-buf" viewBox="0 0 24 24"><rect x="0" y="3" width="24" height="15" rx="7" fill="#86a4d6"/><text x="1" y="15" font-size="12" font-weight="700" font-family="Open Sans" fill="#333d55">abc</text></symbol>
  <symbol id="c-mask" viewBox="0 0 24 24"><rect x=".5" y="3.500" width="23" height="15" rx="7" fill="#e3eaf5" stroke="#b6c4d8" stroke-dasharray="2 1"/><text x="1" y="15" font-size="12" font-weight="700" font-family="Open Sans" fill="#444">abc</text></symbol>
  <symbol id="c-bg" viewBox="0 0 24 24"><path d="M1 3l4-1 3 1 4-1 4 1 3-1 4 1c1 9-2 16-11 19C3 19 0 12 1 3z" fill="#1d68ad" stroke="#444"/><path d="M1 3l4-1 3 1 4-1 4 1 3-1 4 1v3H1z" fill="#c43c3c"/></symbol>
  <symbol id="c-shadow" viewBox="0 0 24 24"><path d="M4 5h19c1 9-3 15-9 17-7-2-10-9-10-17z" fill="#6d7a92"/><path d="M1 3h19c1 9-3 15-9 17C4 18 1 11 1 3z" fill="#e6ecf6" stroke="#9da9bd"/></symbol>
  <symbol id="c-call" viewBox="0 0 24 24"><text x="1" y="9" font-size="12" font-weight="700" font-family="Open Sans" fill="#444">abc</text><path d="M4 23l8-11" stroke="#444" stroke-width="1.600"/></symbol>
  <symbol id="c-place" viewBox="0 0 24 24"><path d="M12 1l4 5h-8zM12 23l4-5h-8zM1 12l5-4v8zM23 12l-5-4v8z" fill="#5f83aa" stroke="#3d5a7b"/><path d="M9.500 6h5v3h-5zM9.500 15h5v3h-5zM6 9.500h3v5H6zM15 9.500h3v5h-3z" fill="#a4bdd8" stroke="#4b6d92"/></symbol>
  <symbol id="c-rend" viewBox="0 0 24 24"><path d="M22 1c-1 6-6 12-11 15l-3-3C12 8 17 4 22 1z" fill="#9a9a9a" stroke="#666"/><path d="M8 13l3 3c-1 5-6 6-10 6 4-2 3-7 7-9z" fill="#555"/></symbol>
  <symbol id="override" viewBox="0 0 24 24"><path d="M1 11l6-7v14z" fill="#777"/><path d="M6 3h13v15H6z" fill="#f8f8f8" stroke="#777" stroke-width="1.500"/><path d="M9 7h8M9 11h8M9 14h6" stroke="#777" stroke-width="1.300"/><path d="M16 19h8l-4 4z" fill="#444"/></symbol>
  <symbol id="round" viewBox="0 0 24 24"><path d="M1 3h14c5 0 8 3 8 8v12H13v-9H1z" fill="#7b9db5" stroke="#34475a" stroke-width="1.500"/><path d="M3 8h11l4 4v10" stroke="#2b5c80" stroke-dasharray="2 2" fill="none" stroke-width="1.500"/></symbol>
  <symbol id="lock" viewBox="0 0 24 24"><rect x="3" y="10" width="18" height="13" fill="#555"/><path d="M7 10V7c0-6 10-6 10 0v3" stroke="#777" stroke-width="2.500" fill="none"/></symbol>
  <symbol id="extent" viewBox="0 0 24 24"><path d="M3 3l8 5M8 2l5 7M2 8l8 4" stroke="#333" stroke-width="3"/><circle cx="14" cy="14" r="7" fill="#888" stroke="#222" stroke-width="2"/><path d="M10 18l8-8M11 11l6 7" stroke="#eee" stroke-width="1.500"/></symbol>
  <symbol id="crs" viewBox="0 0 24 24"><circle cx="12" cy="12" r="10" fill="#d5d5d5" stroke="#666" stroke-width="1.500"/><path d="M12 2v20M2 12h20M4 7h16M4 17h16" stroke="#777" fill="none" stroke-width="1.300"/><ellipse cx="12" cy="12" rx="5" ry="10" fill="none" stroke="#666" stroke-width="1.500"/></symbol>
  <symbol id="chat" viewBox="0 0 24 24"><path d="M5 2h14c3 0 4 2 4 5v5c0 3-1 5-4 5h-2l1 6-6-6H5c-3 0-4-2-4-5V7c0-3 1-5 4-5z" fill="#555"/><path d="M6 9h2M11 9h2M16 9h2" stroke="#fff" stroke-width="2"/></symbol>
  <symbol id="float" viewBox="0 0 12 12"><rect x=".5" y=".5" width="11" height="11" rx="2" fill="none" stroke="#777"/><rect x="4.500" y="2.500" width="5" height="5" fill="none" stroke="#666"/><rect x="2.500" y="4.500" width="5" height="5" fill="#efefef" stroke="#666"/></symbol>
  <symbol id="close" viewBox="0 0 12 12"><rect x=".5" y=".5" width="11" height="11" rx="2" fill="none" stroke="#777"/><path d="M3 3l6 6M9 3L3 9" stroke="#555" stroke-width="1.800"/></symbol>
</svg>

<header class="titlebar">
  <svg class="i15"><use href="#q"/></svg><h1>*ПОСОБИЕ — QGIS</h1>
  <div class="winbtns">
    <button aria-label="Свернуть"><svg viewBox="0 0 10 10"><path d="M0 5.500h9" stroke="#888"/></svg></button>
    <button aria-label="Развернуть"><svg viewBox="0 0 10 10"><path d="M.5 2.500h6v6h-6zM2.500 2.500v-2h6v6h-2" fill="none" stroke="#888"/></svg></button>
    <button aria-label="Закрыть"><svg viewBox="0 0 10 10"><path d="M.5.5l9 9M9.500.5l-9 9" stroke="#888"/></svg></button>
  </div>
</header>
<nav class="menubar">
  <button>Проект</button><button>Правка</button><button>Вид</button><button>Слой</button><button>Настройки</button><button>Модули</button><button>Вектор</button><button>Растр</button><button>Интернет</button><button>Анализ данных</button><button>Справка</button>
</nav>

<div class="toolbar" role="toolbar" aria-label="Проект и навигация">
  <i class="grip"></i>
  <div class="group g6">
    <button aria-label="Создать"><svg><use href="#t-new"/></svg></button><button aria-label="Открыть"><svg><use href="#t-open"/></svg></button><button aria-label="Сохранить"><svg><use href="#t-save"/></svg></button><button aria-label="Макет"><svg><use href="#t-layout"/></svg></button><button aria-label="Менеджер макетов"><svg><use href="#t-manager"/></svg></button><button aria-label="Стили"><svg><use href="#t-style"/></svg></button>
  </div>
  <i class="grip"></i>
  <div class="group g16">
    <button class="on" aria-label="Прокрутка"><svg><use href="#t-hand"/></svg></button><button aria-label="К выделению"><svg><use href="#t-pansel"/></svg></button><button aria-label="Увеличить"><svg><use href="#t-zin"/></svg></button><button aria-label="Уменьшить"><svg><use href="#t-zout"/></svg></button><button aria-label="Полный охват"><svg><use href="#t-zfull"/></svg></button><button aria-label="Увеличить до выделения"><svg><use href="#t-zsel"/></svg></button><button aria-label="Увеличить до слоя"><svg><use href="#t-zlayer"/></svg></button><button class="off" aria-label="1:1"><svg><use href="#t-znat"/></svg></button><button aria-label="Предыдущий охват"><svg><use href="#t-zlast"/></svg></button><button class="off" aria-label="Следующий охват"><svg><use href="#t-znext"/></svg></button><button aria-label="Новая карта"><svg><use href="#t-map"/></svg></button><button aria-label="Новая 3D карта"><svg><use href="#t-map3d"/></svg></button><button aria-label="Новая закладка"><svg><use href="#t-bmark"/></svg></button><button aria-label="Закладки"><svg><use href="#t-book"/></svg></button><button aria-label="Время"><svg><use href="#t-clock"/></svg></button><button aria-label="Обновить"><svg><use href="#t-refresh"/></svg></button>
  </div>
  <i class="grip"></i>
  <div class="group">
    <button class="dd" aria-label="Выбрать"><svg><use href="#t-select"/></svg></button><button class="dd" aria-label="Выбрать по значению"><svg><use href="#t-form"/></svg></button><button class="dd" aria-label="Снять выделение"><svg><use href="#t-desel"/></svg></button><button class="dd" aria-label="Выбрать по местоположению"><svg><use href="#t-selloc"/></svg></button>
  </div>
  <i class="grip"></i>
  <div class="group g4">
    <button aria-label="Определить"><svg><use href="#t-info"/></svg></button><button aria-label="Калькулятор"><svg><use href="#t-abacus"/></svg></button><button aria-label="Обработка"><svg><use href="#t-gear"/></svg></button><button aria-label="Статистика"><svg><use href="#t-sum"/></svg></button>
  </div>
  <div class="group after">
    <button class="dd" aria-label="Таблица"><svg><use href="#t-table"/></svg></button><button class="dd" aria-label="Измерить"><svg><use href="#t-measure"/></svg></button><button class="tip" aria-label="Всплывающие описания"><svg><use href="#t-tip"/></svg></button><button class="dd off" aria-label="Действие"><svg><use href="#t-ghost"/></svg></button>
  </div>
</div>

<div class="toolbar" role="toolbar" aria-label="Слои и подписи">
  <i class="grip"></i>
  <div class="group g6">
    <button aria-label="Источники данных"><svg><use href="#u-add"/></svg></button><button aria-label="GeoPackage"><svg><use href="#u-gpkgn"/></svg></button><button aria-label="Shapefile"><svg><use href="#u-v"/></svg></button><button aria-label="SpatiaLite"><svg><use href="#u-feather"/></svg></button><button aria-label="Временный слой"><svg><use href="#u-chip"/></svg></button><button aria-label="Виртуальный слой"><svg><use href="#u-vbox"/></svg></button>
  </div>
  <i class="grip"></i>
  <div class="group g3">
    <button class="off" aria-label="Текущие правки"><svg><use href="#u-pencils"/></svg></button><button aria-label="Режим правки"><svg><use href="#u-pencil"/></svg></button><button class="off grey" aria-label="Сохранить правки"><svg><use href="#t-save"/></svg></button>
  </div>
  <div class="group after">
    <button class="dd off" aria-label="Линия"><svg><use href="#u-line"/></svg></button><button class="off" aria-label="Точки"><svg><use href="#u-points"/></svg></button>
  </div>
  <div class="group after">
    <button class="dd off" aria-label="Узлы"><svg><use href="#u-vertex"/></svg></button>
  </div>
  <div class="group g7">
    <button class="off" aria-label="Изменить атрибуты"><svg><use href="#u-tedit"/></svg></button><button class="off" aria-label="Удалить"><svg><use href="#u-trash"/></svg></button><button class="off" aria-label="Вырезать"><svg><use href="#u-cut"/></svg></button><button class="off" aria-label="Копировать"><svg><use href="#u-copy"/></svg></button><button class="off" aria-label="Вставить"><svg><use href="#u-paste"/></svg></button><button class="off undo" aria-label="Отменить"><svg><use href="#undo"/></svg></button><button class="off" aria-label="Повторить"><svg><use href="#u-redo"/></svg></button>
  </div>
  <i class="grip"></i>
  <div class="group gtags">
    <button aria-label="Подписи слоя"><svg><use href="#tag"/></svg></button><button aria-label="Диаграммы слоя"><svg><use href="#diag"/></svg></button><i class="vsep"></i><button aria-label="Закреплённые подписи"><svg><use href="#u-tagblue"/></svg></button><button aria-label="Неразмещённые подписи"><svg><use href="#u-tagred"/></svg></button><i class="vsep"></i><button aria-label="Закрепить"><svg><use href="#u-tagpin"/></svg></button><button aria-label="Показать"><svg><use href="#u-tageye"/></svg></button><button aria-label="Переместить"><svg><use href="#u-tagmove"/></svg></button><button aria-label="Повернуть"><svg><use href="#u-tagrot"/></svg></button><button aria-label="Изменить"><svg><use href="#u-tagedit"/></svg></button>
  </div>
  <i class="grip"></i>
  <div class="group g2">
    <button aria-label="Добавить сервис"><svg><use href="#u-globeadd"/></svg></button><button aria-label="Поиск сервисов"><svg><use href="#u-globefind"/></svg></button>
  </div>
  <i class="grip"></i>
  <div class="group one"><button aria-label="Python"><svg><use href="#u-py"/></svg></button></div>
  <i class="grip"></i>
  <div class="group one"><button aria-label="Помощь"><svg><use href="#u-help"/></svg></button></div>
  <i class="grip"></i>
</div>

<div class="toolbar" role="toolbar" aria-label="NextGIS">
  <i class="grip"></i>
  <div class="group"><button aria-label="Учётная запись"><svg><use href="#w-user"/></svg></button></div>
  <i class="grip"></i>
  <div class="group"><button class="on" aria-label="NextGIS Connect"><svg><use href="#w-shield"/></svg></button></div>
  <i class="grip"></i>
  <div class="group rosreestr">
    <button aria-label="Инструмент 1"><svg><use href="#w-a"/></svg></button><button aria-label="Инструмент 2"><svg><use href="#w-b"/></svg></button><button class="dd" aria-label="Инструмент 3"><svg><use href="#w-c"/></svg></button><button aria-label="Инструмент 4"><svg><use href="#w-d"/></svg></button>
  </div>
</div>

<main class="work">
  <aside class="docks">
    <section class="dock browser">
      <header><h2>Браузер</h2><button aria-label="Открепить"><svg><use href="#float"/></svg></button><button aria-label="Закрыть"><svg><use href="#close"/></svg></button></header>
      <div class="dockbar">
        <button aria-label="Добавить слой"><svg><use href="#p-add"/></svg></button><button aria-label="Обновить"><svg><use href="#t-refresh"/></svg></button><button aria-label="Фильтр"><svg><use href="#funnel"/></svg></button><button aria-label="Свернуть всё"><svg><use href="#p-coll"/></svg></button><button aria-label="Свойства"><svg><use href="#p-info"/></svg></button>
      </div>
      <ul class="tree">
        <li><svg><use href="#star"/></svg>Избранное</li>
        <li class="kids"><svg><use href="#f-book"/></svg>Пространственные закладки</li>
        <li class="kids"><svg><use href="#f-proj"/></svg>Домашний каталог проекта</li>
        <li class="kids"><svg><use href="#f-home"/></svg>Домашний каталог</li>
        <li class="kids"><svg><use href="#folder"/></svg>C:\</li>
        <li class="kids"><svg><use href="#folder"/></svg>E:\ (Disk)</li>
        <li><svg><use href="#u-gpkg"/></svg>GeoPackage</li>
        <li><svg><use href="#feather"/></svg>SpatiaLite</li>
        <li><svg><use href="#f-pg"/></svg>PostgreSQL</li>
        <li><svg><use href="#f-ora"/></svg>Oracle</li>
        <li><svg><use href="#f-wms"/></svg>WMS/WMTS</li>
        <li class="kids"><svg><use href="#f-xyz"/></svg>XYZ Tiles</li>
        <li><svg><use href="#f-wcs"/></svg>WCS</li>
        <li class="kids"><svg><use href="#f-ngq"/></svg>NGQ Rosreestr Tools</li>
        <li><svg><use href="#f-wfs"/></svg>WFS / OGC API - Features</li>
      </ul>
    </section>
    <section class="dock layers">
      <header><h2>Слои</h2><button aria-label="Открепить"><svg><use href="#float"/></svg></button><button aria-label="Закрыть"><svg><use href="#close"/></svg></button></header>
      <div class="dockbar">
        <button aria-label="Стилизация"><svg><use href="#brush"/></svg></button><button aria-label="Добавить группу"><svg><use href="#l-group"/></svg></button><button aria-label="Видимость"><svg><use href="#l-eye"/></svg></button><button aria-label="Фильтр"><svg><use href="#funnel"/></svg></button><button class="dd" aria-label="Выражение"><svg><use href="#l-eps"/></svg></button><button aria-label="Развернуть всё"><svg><use href="#p-exp"/></svg></button><button aria-label="Свернуть всё"><svg><use href="#p-coll"/></svg></button><button aria-label="Удалить слой"><svg><use href="#l-rem"/></svg></button>
      </div>
      <ul class="legend">
        <li class="top sel"><label><input type="checkbox" checked><svg><use href="#l-points"/></svg><b class="ul">Водоисточники [8]</b></label></li>
        <li><label><input type="checkbox" checked><svg><use href="#s-zak"/></svg><span>Закр. ВИ [1]</span></label></li>
        <li><label><input type="checkbox" checked><svg><use href="#s-kol"/></svg><span>Колодец [2]</span></label></li>
        <li><label><input type="checkbox" checked><svg><use href="#s-pv"/></svg><span>ПВ [1]</span></label></li>
        <li><label><input type="checkbox" checked><svg><use href="#s-pg"/></svg><span>ПГ [3]</span></label></li>
        <li class="tall"><label><input type="checkbox" checked><svg><use href="#s-pk"/></svg><span>ПК [1]</span></label></li>
        <li class="top osm"><label><input type="checkbox" checked><svg><use href="#l-raster"/></svg><b>OpenStreetMap</b></label></li>
      </ul>
    </section>
  </aside>

  <svg class="map" viewBox="3 6 3267 1746" preserveAspectRatio="xMinYMin slice" role="img" aria-label="Карта">
    <rect x="0" y="0" width="3300" height="1800" fill="#f2efe9"/>
    <!-- land use -->
    <path d="M4 6h176L30 150 4 130z" fill="#f2dada"/>
    <path d="M35 150L170 20l110 150-160 95z" fill="#e8e8ea"/>
    <path d="M45 155l65-75 90 125-75 55z" fill="#efefef" stroke="#ddd"/>
    <path d="M130 265l140-85 275 430-95 75-30-10-140-180z" fill="#f2dada"/>
    <path d="M4 190l110 120 330 380-300 260L4 810z" fill="#e0dfdf"/>
    <path d="M4 530l140 130 50 90 140 35-185 170-60-20-85-90z" fill="#cdf5c8"/>
    <path d="M4 530l140 130 50 90 140 35-185 170-60-20-85-90z" fill="url(#dots)"/>
    <path d="M10 510l120 90 30-40 5 80-40 40" fill="#efdedd"/>
    <path d="M20 720l60 60-25 10-40-40z" fill="#a3c59d"/>
    <circle cx="159" cy="828" r="20" fill="#c9cccf" stroke="#b3b7ba" stroke-width="4"/>
    <path d="M70 440l40-40 18 10-5 40 20 20 20-15 12 15-25 25-30-20-10-35z" fill="#c8f2c6"/>
    <rect x="119" y="467" width="20" height="37" fill="#88e0be"/>
    <path d="M608 362h92v28h50v100h110v92H685l-70-130z" fill="#ffd3d0"/>
    <path d="M610 625h250l110-5 60 20-140 110-60 145-75 5L630 690z" fill="#f8d5d2"/>
    <path d="M945 490h90v60h-90z" fill="#ffd3d0"/>
    <path d="M866 345h164v145h-90v100h-74z" fill="#e0dfdf"/>
    <path d="M945 385l35-20 20 30-25 45-30-5zM935 440l30 5 5 20-25-10zM1000 450l25 5v15z" fill="#cdf5c8"/>
    <path d="M945 385l35-20 20 30-25 45-30-5z" fill="url(#dots)"/>
    <path d="M1100 133H940c-45 5-45 84 0 89h160z" fill="#88e0be" stroke="#6cc9a6" stroke-width="2"/>
    <path d="M820 720l60-10 5 40-60 70-90-20z" fill="#ececee"/>
    <path d="M430 760l40-15 60 20 30 60-60 60-60-40z" fill="#e9e7e5"/>
    <path d="M375 365l10-8 18 20-15 12-25-15z" fill="#c8f2c6"/>
    <path d="M440 880l20-50 25 8-25 60z" fill="#b9edb9"/>
    <path d="M548 385l60-10v60l-40 10z" fill="#e8e8ea"/>
    <g transform="translate(0 876)">
      <path d="M4-10h90l60 110L4 215z" fill="#e0dfdf"/>
      <path d="M90-30h160L150 100z" fill="#cdf5c8"/><path d="M90-30h160L150 100z" fill="url(#dots)"/>
      <path d="M22 215l150-115 170 220-12 10L165 125 40 235v340H22z" fill="#f3dfdc"/>
      <path d="M22 215l150-115 170 220-12 10L165 125 40 235v340H22z" fill="url(#dots)"/>
      <path d="M190 110l70-70 65 60-65 65zM250 165l105-95 60 50-120 100z" fill="#e8e8ea" stroke="#d9d9dc" stroke-width="2"/>
      <path d="M100 200l70-70 160 190-80 75-60-20z" fill="#e0dfdf"/>
      <path d="M190 290l25-20 30 20-30 15z" fill="#b9edb9"/>
      <path d="M100 520l120-100 110 130-130 110z" fill="#e0dfdf"/>
      <path d="M130 700l200-120 160 120-130 180H60z" fill="#e0dfdf"/>
      <path d="M330 520l50-15 25 25-50 40z" fill="#c5e8ac"/>
      <path d="M130 720l60-55 8 12-50 40z" fill="#b9edb9"/>
      <path d="M20 780l60-40 30 15-60 40z" fill="#cdf5c8"/>
      <path d="M495 170l75-50 130 80-60 90z" fill="#f3d5d2"/>
      <path d="M570 130l40-35 55 50-45 35z" fill="#ececee" stroke="#ddd"/>
      <path d="M665 395l85 70 5 20-90 75-60-75z" fill="#c8c9ad"/>
      <path d="M760 460l60 10 100-40 35-60 75 60-60 60-80 80-120 40-70 70-55 35-5-90z" fill="#cbddaf"/>
      <path d="M410 880l30-90 60-80 115-115 35 25-10 90-60 90-30 80z" fill="#abd29c"/>
      <path d="M1030 440c-30 20-60 30-70 55-15 30-50 55-80 75l-80 50c-70 40-90 100-150 125-40 50-40 90-45 140h425z" fill="#aad3df"/>
      <g fill="#f2efe9"><path d="M750 660l80-35c10 60-30 120-75 140-20 20-30 20-55 30z"/><path d="M620 740l70-25c5 20-30 60-60 80-15-5-15-30-10-55z"/><path d="M690 835l80-40-20 60-10 15z"/><path d="M880 590l30-10-15 30-15 5zM865 630l20-5-5 20-15 5zM795 655l30-18-5 20-25 10z"/><path d="M615 870l60-5 5 15h-70z"/></g>
      <path d="M760 460l150 10 45-90-110-100-130 120z" fill="#f2efe9"/>
      <path d="M760 460c60 20 100 10 150-30l50-55M755 480l-60 75-50 40-40 60" fill="none" stroke="#b7b3b0" stroke-width="3"/>
      <path d="M735 520l12 8-4-16zM765 482l10 14 6-16zM805 470v18l12-14zM845 468l8 20 8-20zM885 450l8 14 6-18zM910 412l14 10v-18zM668 580l12 8v-18zM630 610l12 10v-18z" fill="#8d8a88"/>
      <path d="M970 130l60-45v130l-70-60z" fill="#f3d5d2"/>
    </g>
    <!-- minor roads -->
    <g fill="none" stroke="#d5d5d6" stroke-width="6"><path d="M370 110l55-60 45-10 70 275 70 12 190-2M470 170l135 10M430 370l110-55M610 6v170l-5 45-80 5M612 60h270l10 45 135 5M900 10v90M800 70v250h230M845 70v250M500 230l30 60M200 220l120 120 60 40M105 345l150 170-30 60-90 90M250 550l60 100 100 40M640 620l110 10v200M900 740l90-70 30 30M860 880l160-140M520 500l70-30 70 80"/></g>
    <g fill="none" stroke="#fff" stroke-width="4"><path d="M370 110l55-60 45-10 70 275 70 12 190-2M470 170l135 10M430 370l110-55M610 6v170l-5 45-80 5M612 60h270l10 45 135 5M900 10v90M800 70v250h230M845 70v250M105 345l150 170-30 60-90 90M250 550l60 100 100 40M640 620l110 10v200M900 740l90-70 30 30M860 880l160-140M870 350v230M60 300L4 370"/>
    <path d="M165 980l310 350M475 1310L270 1180M240 1290l-180 140v120M240 1290l130 170 60 80M200 1640v100M330 1490l-40 60 30 100M700 1230l130-50 60 30-110 140M550 1270l-100 120 20 40" stroke="#ebebeb" stroke-width="10"/></g>
    <!-- buildings -->
    <g fill="#d9d0c9" stroke="#c6bbb1" stroke-width="2">
      <path d="M130 100l50-45 40 50-15 20 25 25-30 40z"/><path d="M248 65l25-20 15 45-30 10z"/><path d="M312 45l40 5 5-12 12 2-5 50-12 20h-25l5-50-20-2z"/><path d="M295 260l15-15 45 30 10 50-20 10-45-40z"/><path d="M355 120l45 5-10 40-30-20z"/><path d="M412 155l-12 35-5-2 10-35z"/><path d="M465 118h15v20h-15zM470 165h17v12h-17zM442 300h25v14h-25zM415 88h12v9h-12z"/>
      <path d="M517 35h13v56h-13zM516 105h15v45h-15zM553 17h52v17h-52zM550 50h52v17h-52zM553 88h49v14h-49z"/>
      <path d="M537 188h58v24h-58zM622 122h38v15h-38zM678 122h40v15h-40zM745 125h44v15h-44zM622 157h38v14h-38zM678 157h42v15h-42zM733 160h50v12h-50zM712 266h25v13h-25zM755 267h33v16h-33zM753 370h32v20h-32z"/>
      <path d="M670 20h54v18h-54zM743 15h52v18h-52zM621 18h10v15h-10zM643 18h10v15h-10zM817 6h18v30h-18zM812 84h23v84h-23zM809 213h24v72h-24zM856 163h24v120h-24zM902 265h58v20h-58zM1002 265h28v20h-28z"/>
      <path d="M665 433h50v-12h30v100h-82zM762 508h17v38h-17zM836 518h17v28h-17z"/><path d="M790 492h37v88h-37z" fill="#f3efea"/>
      <path d="M895 360h30v32h-30zM893 415h30v38l-30-5zM895 472h30v90h-30zM1000 360h26v28h-26z"/>
      <path d="M474 418l15-8 15 40-12 5zM510 398l25-8 35 70-20 8zM585 470l18-5 12 28-15 8z"/>
      <path d="M382 520l82-17 15 48-85 28zM410 610l40-12 10 30-45 12zM365 495l20 2v30h-10zM462 592l15-4 4 18-12 4zM390 415l20 10-5 20-18-5zM335 455l30-2-20 18z"/>
      <path d="M652 670l35-35 55 40-35 45zM773 630h118v70l-120-8zM905 630l40 20-38 38zM743 770l40-50 45 35-5 50-45 10zM708 740l20-12 15 15-18 15zM780 850l45-25 10 25-30 20zM890 820l20-40 20 35z"/>
      <path d="M910 705l40-20 5 20 35-50 30 30-30 50-50 50-18-20 50-50-50 10z"/>
      <path d="M185 615l75-70 125 110-65 100-60-20 20 15-45 40-45-60 40-40z"/>
      <path d="M105 360l18-15 130 140-20 25z"/><path d="M35 390l50-30 15 20-45 40zM20 460l30-10 0 50h-30zM70 520l30-15 25 40 25 15-30 45-45-60zM140 530l30-35 40 35-40 35z"/>
      <path d="M12 225l20-10 55 90-10 15z"/>
      <path d="M430 790h60v35h-50zM570 850l30-15-5 30-35 40-20-20z"/>
      <g transform="translate(0 876)">
        <path d="M400 170q40-15 75 5l65 90q15 30-10 55l-50 25q-20 8-40-10l-60-80q-20-40 20-85z"/>
        <path d="M60 230l45-10 15 25-35 35 5 90 20 25-20 10-30-25z"/><path d="M118 360l20-10 30 45 50 15-20 20q-60-5-80-70z"/><path d="M170 170l20-5 122 140-20 15zM105 190l45-25 5 20-45 20z"/>
        <path d="M55 445h17v40H55zM80 480l55-50 30 35-45 45-35-5z"/>
        <path d="M210 495l20-10 45 65-15 10zM160 560l30-10 40 80-20 15zM90 650l30-40 10-10 30 40-40 35zM230 380l25-25 15 10-35 30z"/>
        <path d="M305 385l50-30 75 90-40 35-55-40 30-25-20-25-30 20z"/><path d="M320 505l20-20 15 15-25 20z"/>
        <path d="M300 30l35-15 35 40-30 30-45-40zM465 30l70-30 10 60-40 25-40-40zM485 160l20-10 10 15-20 15z"/>
        <path d="M550 200l40-35 25 40zM610 240l60-50 20 30-50 50z"/><path d="M530 350l35-30 15 20-50 30z"/>
        <path d="M700 370l80-50 45 45-60 55z"/><path d="M430 590l30-30 35 30-30 20-20 5zM570 475l20-25 20 15-20 30z"/><path d="M480 610l25-28 40 35-25 30z" fill="#e4e4e6"/>
        <path d="M300 660h30v35h-30zM345 655h40v40h-40zM285 715l30-10 70 5v40h-95zM215 770h40v40h-40zM335 780h35v30h-35z"/><circle cx="293" cy="850" r="17"/><circle cx="446" cy="684" r="20" fill="#b9a99d"/>
        <path d="M4 80l60-40 60 60-20 20-40-40-60 45z" fill="#d5cec9"/>
        <path d="M980 160l50-35v70z"/>
        <path d="M150 800l40-15 50 60-20 30h-50z"/>
      </g>
    </g>
    <rect x="282" y="1646" width="28" height="25" fill="#7fd0a7"/>
    <!-- parking aisles beside the river road -->
    <g fill="none" stroke="#dedede" stroke-width="12"><path d="M770 1310l90-100M785 1325l100-100M960 1040l70 90M965 1000l70-60"/></g>
    <!-- major roads: casing, then fill -->
    <g fill="none" stroke="#c9c9c9" stroke-width="31"><path d="M560 628L0 1085M0 810l160 160"/></g>
    <g fill="none" stroke="#fff"><path d="M560 628L0 1085" stroke-width="27"/><path d="M0 810l165 165" stroke-width="14"/><path d="M15 1050v420" stroke-width="18"/><path d="M395 1440l40 30 10 50 45 45-20 50-140 140" stroke-width="12"/></g>
    <path d="M500 690l55-45 170 255-85-80zM465 725l50 50-45-10z" fill="#c8e6a5"/>
    <g fill="none" stroke="#bd9659" stroke-linejoin="round">
      <path d="M195 0L400 350 540 590 640 750 745 905 900 1100 1060 1310" stroke-width="42"/>
      <path d="M0 160Q190 335 300 480T430 670L600 810 730 920" stroke-width="39"/>
      <path d="M545 590Q700 600 860 595T1060 670" stroke-width="30"/>
      <path d="M600 690Q585 630 680 610" stroke-width="12"/>
      <path d="M0 1745L130 1625 400 1420 640 1230 800 1070 1060 850" stroke-width="61"/>
      <path d="M370 800Q430 735 540 770" stroke-width="22"/>
      <path d="M640 880Q700 910 665 975T730 1110" stroke-width="38"/>
      <path d="M680 1210Q800 1120 900 1150T1040 1260" stroke-width="28"/>
      <path d="M1040 880Q940 1000 930 1120" stroke-width="24"/>
    </g>
    <g fill="none" stroke="#fbd19a" stroke-linejoin="round">
      <path d="M195 0L400 350 540 590 640 750 745 905 900 1100 1060 1310" stroke-width="37"/>
      <path d="M0 160Q190 335 300 480T430 670L600 810 730 920" stroke-width="34"/>
      <path d="M545 590Q700 600 860 595T1060 670" stroke-width="25"/>
      <path d="M600 690Q585 630 680 610" stroke-width="8"/>
      <path d="M0 1745L130 1625 400 1420 640 1230 800 1070 1060 850" stroke-width="56"/>
      <path d="M370 800Q430 735 540 770" stroke-width="17"/>
      <path d="M640 880Q700 910 665 975T730 1110" stroke-width="33"/>
      <path d="M680 1210Q800 1120 900 1150T1040 1260" stroke-width="23"/>
      <path d="M1040 880Q940 1000 930 1120" stroke-width="19"/>
    </g>
    <path d="M905 1015l90-75-60 75-15 55-30-25zM705 1172l105-95 45 52-75 8z" fill="#c8e6a5" stroke="#bd9659" stroke-width="2"/>
    <path d="M560 598l32 5-20 20z" fill="#fff" stroke="#bd9659" stroke-width="3"/>
    <path d="M0 1490l120 130" stroke="#dcd58e" stroke-width="24"/><path d="M0 1490l120 130" stroke="#f7f5b0" stroke-width="19"/>
    <path d="M683 990c0-40 40-35 55-15l35 65c5 20-15 25-30 15l-35-25z" fill="#c8e6a5" stroke="#bd9659" stroke-width="3"/>
    <path d="M245 395l40-35" stroke="#6b5640" stroke-width="4" stroke-dasharray="10 8"/>
    <path d="M770 1050l50-45M800 1085l40-35M940 1210l90 105" stroke="#555" stroke-width="3"/>
    <path d="M905 1008l40 12M910 1000l35 12M925 1022l18-18" stroke="#777" stroke-width="4"/>
    <g fill="none" stroke="#e88f88" stroke-width="4" stroke-dasharray="6 7"><path d="M28 1120v380M175 990l160 210M530 1080l110 90M30 1110l130-120M370 1480l40 50"/></g>
    <g fill="none" stroke="#8aa57c" stroke-width="3"><path d="M800 1425l6-12 6 12M745 1450l6-12 6 12M895 1385l6-12 6 12M935 1340l6-12 6 12"/><path d="M515 1640v-18c0-12 14-12 14 0v18M525 1740v-18c0-12 14-12 14 0v18M590 1540v-18c0-12 14-12 14 0v18"/></g>
    <!-- labels -->
    <g font-family="Open Sans, Noto Sans, sans-serif">
      <g class="street" font-size="31">
        <text transform="translate(262 150) rotate(58)">улица Авиаторов</text>
        <text transform="translate(752 946) rotate(51)">улица Авиаторов</text>
        <text transform="translate(-45 128) rotate(45)">Авиаторов</text>
        <text transform="translate(348 1462) rotate(-42)">улица Партизана Железняка</text>
      </g>
      <text class="street" font-size="25" transform="translate(388 1720) rotate(-53)">Кубанская улица</text>
      <g class="suburb" font-size="42"><text x="338" y="820">Советский</text><text x="338" y="876">район</text></g>
      <g class="quarter" font-size="33"><text x="76" y="672">Взлётка,</text><text x="82" y="715">микрорайон</text><text x="73" y="760">АЦ</text></g>
      <g class="quarter" font-size="29"><text x="318" y="1624">ЖК «Перья»</text><text x="984" y="528">ЖК «SCAN»</text></g>
      <text x="1005" y="1388" font-size="34" fill="#555">О</text>
      <text font-size="28" fill="#6b96b8" font-style="italic" transform="translate(1003 1752) rotate(-60)">протока</text>
      <g fill="#1a93d1" font-weight="700" font-size="48"><text x="96" y="194">P</text><text x="228" y="145">P</text><text x="269" y="973">P</text><text x="317" y="1037">P</text><text x="963" y="1106">P</text></g>
    </g>
    <use href="#s-kol" x="812" y="875" width="40" height="44"/>
    <use href="#s-pk" x="844" y="1162" width="44" height="50"/>
    <g class="bluelabel" font-size="33"><text x="872" y="880">Кол</text><text x="906" y="1188">ПК-50</text></g>
  </svg>
</main>

<footer class="statusbar">
  <label class="locator"><svg><use href="#search"/></svg><input type="text" placeholder="Искать (Ctrl+K)" aria-label="Искать"></label>
  <div class="status">
    <label for="coords">Координаты</label><input id="coords" type="text" value="10343786  7565874">
    <svg class="i13"><use href="#extent"/></svg>
    <label for="scale">Масштаб</label><select id="scale" class="arrow"><option>1:15400</option></select>
    <svg class="i12"><use href="#lock"/></svg>
    <label for="magn">Увеличение</label><span class="spin"><input id="magn" type="text" value="100%"></span>
    <label for="rot" class="rot">Поворот</label><span class="spin"><input id="rot" type="text" value="0,0 °"></span>
    <label class="chk"><input type="checkbox" checked>Отрисовка</label>
    <svg class="i12 crs"><use href="#crs"/></svg><span>EPSG:3857</span>
    <svg class="i14 chat"><use href="#chat"/></svg>
  </div>
</footer>

<section class="dialog" role="dialog" aria-labelledby="dlgt">
  <header><svg class="i15"><use href="#q"/></svg><h2 id="dlgt">Свойства слоя — Водоисточники — Подписи</h2></header>
  <div class="dlgbody">
    <div class="side">
      <label class="find"><svg><use href="#search"/></svg><input type="text" aria-label="Поиск"></label>
      <div class="sidescroll">
        <ul class="pages">
          <li><svg><use href="#p-info"/></svg>Информация</li>
          <li><svg><use href="#d-src"/></svg>Источник</li>
          <li><svg><use href="#brush"/></svg>Стиль</li>
          <li class="cur"><svg><use href="#tag"/></svg>Подписи</li>
          <li><svg><use href="#d-mask"/></svg>Маски</li>
          <li><svg><use href="#d-cube"/></svg>3D вид</li>
          <li><svg><use href="#diag"/></svg>Диаграммы</li>
          <li><svg><use href="#d-fields"/></svg>Поля</li>
          <li><svg><use href="#d-forms"/></svg>Формы полей</li>
          <li><svg><use href="#d-join"/></svg>Связи</li>
          <li class="two"><svg><use href="#d-store"/></svg>Служебное<br>хранилище</li>
          <li><svg><use href="#d-act"/></svg>Действия</li>
          <li><svg><use href="#d-tip"/></svg>Отображение</li>
          <li><svg><use href="#d-rend"/></svg>Отрисовка</li>
          <li class="two"><svg><use href="#d-clock"/></svg>Временны́е<br>данные</li>
          <li><svg><use href="#d-eps"/></svg>Переменные</li>
          <li><svg><use href="#d-elev"/></svg>Elevation</li>
          <li><svg><use href="#d-meta"/></svg>Метаданные</li>
        </ul>
        <div class="vscroll"><i class="up"></i><i class="thumb"></i><i class="rest"></i><i class="down"></i></div>
      </div>
    </div>
    <div class="content">
      <div class="combo mode"><svg><use href="#tag"/></svg><select aria-label="Режим подписей"><option>Обычные подписи</option></select></div>
      <div class="value"><label for="val">Значение</label><div class="combo white"><svg><use href="#c-abc"/></svg><select id="val"><option>Подпись</option></select></div></div>
      <h3>Образец текста</h3>
      <div class="sample">
        <div class="preview">Lorem Ipsum</div>
        <div class="samplebar">
          <input type="text" value="Lorem Ipsum" aria-label="Текст образца">
          <button class="reset" aria-label="Сбросить"><svg><use href="#undo"/></svg></button>
          <select class="arrow" aria-label="Масштаб образца"><option>1:15400</option></select>
          <button class="pick" aria-label="Масштаб карты"><svg viewBox="0 0 16 16"><path d="M1 2h9v10H1z" fill="#c5ccd4" stroke="#888"/><path d="M6 4v9l2.500-2 2 4 1.500-1-2-4h3z" fill="#fff" stroke="#444"/></svg></button><button class="mini" aria-label="Меню"></button>
          <button class="swatch" aria-label="Цвет фона"></button>
        </div>
      </div>
      <div class="split">
        <div class="catbox">
          <ul class="cats">
            <li><svg><use href="#c-abc"/></svg>Текст</li>
            <li><svg><use href="#c-fmt"/></svg>Форматирование</li>
            <li class="cur"><svg><use href="#c-buf"/></svg>Буфер</li>
            <li><svg><use href="#c-mask"/></svg>Маска</li>
            <li><svg><use href="#c-bg"/></svg>Фон</li>
            <li><svg><use href="#c-shadow"/></svg>Тень</li>
            <li><svg><use href="#c-call"/></svg>Выноски</li>
            <li><svg><use href="#c-place"/></svg>Размещение</li>
            <li><svg><use href="#c-rend"/></svg>Отрисовка</li>
          </ul>
          <div class="hscroll"><i class="left"></i><i class="thumb"></i><i class="rest"></i><i class="right"></i></div>
        </div>
        <form class="buffer">
          <h4>Буфер</h4>
          <div class="enable"><label class="chk"><input type="checkbox" checked>Буферизовать подписи</label><svg class="i19"><use href="#override"/></svg></div>
          <div class="row"><label for="size">Размер</label><input id="size" type="text" value="1,0000"></div>
          <div class="row"><span></span><div class="combo"><select aria-label="Единицы"><option>миллиметры</option></select></div></div>
          <div class="row"><label for="color">Цвет</label><button type="button" id="color" class="color" aria-label="Цвет"></button></div>
          <div class="row short"><span></span><label class="chk"><input type="checkbox">Закрашивать внутреннюю часть буфера</label></div>
          <div class="row opacity"><label for="op">Непрозрачность</label><input id="op" type="range" min="0" max="100" value="100"><input type="text" value="100,0 %" aria-label="Непрозрачность, %"></div>
          <div class="row"><label for="join">Стиль сопряжения</label><div class="combo tall"><svg><use href="#round"/></svg><select id="join"><option>Скруглённое</option></select></div></div>
          <div class="row"><label for="blend">Режим смешивания</label><div class="combo tall"><select id="blend"><option>Обычный</option></select></div></div>
          <div class="row"><label class="chk wide"><input type="checkbox">Эффекты отрисовки</label></div>
        </form>
      </div>
      <div class="buttons"><button class="btn style">Стиль</button><span class="fill"></span><button class="btn">ОК</button><button class="btn">Отмена</button><button class="btn primary">Применить</button><button class="btn last" aria-label="Справка"></button></div>
    </div>
  </div>
  <svg class="arrows" viewBox="0 0 60 60" aria-hidden="true"><g stroke="#cc1f1f" stroke-width="1.500" fill="#cc1f1f"><path d="M50 52V8M51 52L6 26" fill="none"/><path d="M50 4l2 6h-4zM2 24l7 1-3 4z" stroke-width="1"/></g></svg>
  <svg class="pointer" viewBox="0 0 10 17" aria-hidden="true"><path d="M1 1v12l2.500-2.500L6 16l2-1-2.500-5H9z" fill="#000"/></svg>
</section>
</body>
</html>
```
FILE: styles.css
```css
* { box-sizing: border-box; }
html, body { height: 100%; margin: 0; overflow: hidden; }
body {
  display: flex; flex-direction: column; position: relative;
  background: #efefef; color: #222;
  font: 10px/14px "Open Sans", "Noto Sans", sans-serif;
}
button, input, select { font: inherit; color: inherit; margin: 0; }
button { padding: 0; border: 0; background: none; }
h1, h2, h3, h4, ul { margin: 0; padding: 0; font: inherit; list-style: none; }
svg { display: block; flex: none; }
.paints { position: absolute; width: 0; height: 0; }
.sprite { display: none; }
.i12 { width: 12px; height: 12px; }
.i13 { width: 13px; height: 13px; }
.i14 { width: 14px; height: 14px; }
.i15 { width: 15px; height: 15px; }
.i19 { width: 19px; height: 19px; }

.titlebar { display: flex; align-items: center; flex: none; height: 20px; padding: 0 16px 0 1px; gap: 3px; background: #fff; color: #777; }
.winbtns { display: flex; margin-left: auto; gap: 30px; }
.winbtns svg { width: 10px; height: 10px; }
.menubar { display: flex; flex: none; height: 18px; padding: 0 9px; gap: 11px; color: #999; border-bottom: 1px solid #d6d6d6; }

.toolbar { display: flex; align-items: center; flex: none; height: 34px; padding-left: 3px; background: linear-gradient(#fafafa, #ececec); border-bottom: 1px solid #cfcfcf; }
.toolbar button { display: flex; align-items: center; justify-content: center; width: 24px; height: 28px; }
.toolbar svg { width: 23px; height: 23px; }
.toolbar .group { display: flex; justify-content: space-between; margin: 0 7px 0 6px; flex: none; }
.grip { flex: none; width: 4px; height: 18px; background: radial-gradient(circle, #ccc 40%, transparent 50%) 0 0 / 2px 3px; }
.toolbar .g6 { width: 167px; margin-right: 9px; }
.toolbar .g16 { width: 452px; }
.toolbar .g4 { width: 110px; margin: 0; }
.toolbar .g3 { width: 81px; margin-right: 0; }
.toolbar .g7 { width: 195px; margin-left: 0; }
.toolbar .gtags { width: 266px; }
.toolbar .g2 { width: 53px; }
.toolbar .one { width: 24px; }
.toolbar .after { margin: 0 0 0 4px; }
.toolbar .rosreestr { gap: 5px; }
.toolbar .on { width: 28px; margin: 0 -2px; background: #dcdcdc; border: 1px solid #b9b9b9; border-radius: 2px; }
.toolbar .off { opacity: .35; }
.toolbar .grey { filter: grayscale(1); }
.toolbar .undo { color: #977; }
.toolbar .dd { width: 39px; justify-content: flex-start; gap: 4px; }
.toolbar .rosreestr .dd { width: 34px; }
.dd::after { content: ""; border: 3px solid transparent; border-top: 4px solid #555; border-bottom: 0; }
.toolbar .tip { margin-right: 5px; }
.vsep { width: 1px; background: #d5d5d5; margin: 4px 0; }

.work { display: flex; flex: 1; min-height: 0; padding: 0 0 1px; }
.docks { display: flex; flex-direction: column; flex: none; width: 239px; padding-right: 5px; border-right: 1px solid #ccc; gap: 4px; }
.dock { display: flex; flex-direction: column; flex: 1; min-height: 0; }
.dock.browser { flex: 0 0 290px; }
.dock header { display: flex; align-items: center; height: 18px; padding: 0 1px 0 3px; gap: 2px; }
.dock h2 { flex: 1; }
.dock header svg { width: 11px; height: 11px; }
.dockbar { display: flex; align-items: center; height: 25px; padding: 0 6px; gap: 7px; }
.dockbar button { display: flex; align-items: center; gap: 4px; }
.dockbar svg { width: 15px; height: 15px; }
.tree, .legend { flex: 1; background: #fff; border: 1px solid #c2c2c2; }
.tree { display: grid; grid-auto-rows: 1fr; padding-bottom: 12px; line-height: 15px; }
.tree li { display: flex; align-items: center; gap: 5px; padding-left: 16px; }
.tree svg { width: 14px; height: 14px; }
.tree .kids { padding-left: 5px; }
.tree .kids::before { content: ""; border: 3px solid transparent; border-left: 4px solid #666; border-right: 0; margin-right: 2px; }
.legend li, .legend label { display: flex; align-items: center; }
.legend li { height: 20px; padding-left: 37px; }
.legend svg { width: 17px; height: 17px; }
.legend label { gap: 5px; }
.legend span { margin-left: 17px; color: #444; }
.legend .top { padding-left: 5px; height: 16px; }
.legend .top::before { content: ""; border: 3px solid transparent; border-top: 4px solid #777; border-bottom: 0; margin-right: 9px; }
.legend .top svg { width: 12px; height: 12px; margin: 0 1px; }
.legend .sel { background: #efefef; }
.legend .ul { text-decoration: underline; }
.legend .tall { height: 40px; }
.legend .tall svg { height: 21px; margin-bottom: 16px; }
.legend .osm { height: 20px; }

input[type="checkbox"] { appearance: none; flex: none; width: 12px; height: 12px; border: 1px solid #c2c2c2; background: #fff; }
input[type="checkbox"]:checked { display: grid; place-items: center; }
input[type="checkbox"]:checked::before { content: ""; width: 4px; height: 8px; border: solid #111; border-width: 0 2px 2px 0; transform: rotate(38deg); margin-top: -2px; }

.map { flex: 1; min-width: 0; width: 100%; height: 100%; border-top: 1px solid #bbb; }
.street { fill: #3d372c; stroke: #fbd19a; stroke-width: 2px; paint-order: stroke; }
.suburb { fill: #777; text-anchor: middle; stroke: #fff; stroke-width: 6px; paint-order: stroke; }
.quarter { fill: #777; font-style: italic; text-anchor: middle; stroke: #fff; stroke-width: 4px; paint-order: stroke; }
.bluelabel { fill: #2a2ac0; font-family: "Liberation Sans", Arial, sans-serif; font-weight: 700; stroke: #fff; stroke-width: 7px; paint-order: stroke; }

.statusbar { display: flex; flex: none; height: 23px; align-items: center; border-bottom: 1px solid #555; font-size: 9px; }
.locator { display: flex; align-items: center; gap: 6px; width: 173px; height: 19px; margin-left: 3px; padding-left: 7px; border: 1px solid #aaa; background: #fff; }
.locator svg { width: 11px; height: 11px; }
.locator input { width: 130px; border: 0; padding: 0; outline: 0; background: none; }
.locator input::placeholder { color: #888; }
.status { display: flex; align-items: center; flex: 1; height: 20px; margin: 3px 0 0 401px; gap: 3px; overflow: hidden; white-space: nowrap; }
.status input[type="text"], .status select { height: 18px; padding: 0 4px; border: 1px solid #bbb; background: #fff; }
#coords { width: 96px; white-space: pre; }
.status .i13 { margin: 0 8px 0 2px; }
#scale { width: 66px; }
.status .i12 { margin: 0 3px 0 7px; }
.spin { display: flex; align-items: center; width: 70px; background: #fff; border: 1px solid #bbb; height: 18px; }
.spin input[type="text"] { flex: 1; width: 40px; border: 0; height: 14px; }
.spin::after { content: ""; width: 8px; height: 10px; margin-right: 2px; background: linear-gradient(#666, #666) 2px 0 / 4px 3px no-repeat, linear-gradient(#666, #666) 2px 7px / 4px 3px no-repeat; }
.rot { margin: 0 4px; }
.status .chk { margin-left: 1px; }
.status .crs { margin: 0 -1px 0 10px; }
.chat { margin-left: auto; margin-right: 5px; }
.chk { display: flex; align-items: center; gap: 5px; }

.dialog {
  position: absolute; left: 579px; right: 0; top: 110px; bottom: 15px;
  display: flex; flex-direction: column; overflow: hidden;
  background: #efefef; border: solid #777; border-width: 1px 0 1px 1px;
  box-shadow: -2px 1px 6px rgba(0, 0, 0, .35);
}
.dialog > header { display: flex; align-items: center; flex: none; height: 25px; padding-left: 6px; gap: 3px; background: #fff; }
.dlgbody { display: flex; flex: 1; min-height: 0; }
.side { display: flex; flex-direction: column; flex: none; width: 130px; background: #5c5c5c; }
.find { display: flex; align-items: center; flex: none; height: 19px; padding-left: 7px; background: #fff; border: 1px solid #666; }
.find svg { width: 12px; height: 12px; }
.find input { width: 90px; border: 0; background: none; outline: 0; }
.sidescroll { display: flex; flex: 1; min-height: 0; }
.pages { flex: 1; padding-top: 6px; color: #f3f3f3; }
.pages li { display: flex; align-items: center; height: 31px; padding-left: 4px; gap: 6px; white-space: nowrap; }
.pages .two { height: 35px; line-height: 14px; }
.pages svg { width: 22px; height: 22px; }
.pages .cur { background: #f2f2f2; color: #222; padding-left: 7px; }
.vscroll { display: flex; flex-direction: column; width: 12px; margin-top: 4px; background: #f4f4f4; }
.vscroll i, .hscroll i { display: block; }
.vscroll .up, .vscroll .down { flex: none; height: 11px; padding: 3px; }
.up::before { content: ""; display: block; width: 0; border: 3px solid transparent; border-bottom: 4px solid #555; border-top: 0; }
.down::before { content: ""; display: block; width: 0; border: 3px solid transparent; border-top: 4px solid #555; border-bottom: 0; }
.vscroll .thumb { flex: 9; background: #f8f8f8; border: solid #ccc; border-width: 1px 0; }
.vscroll .rest { flex: 2; background: #e0e0e0; }

.content { display: flex; flex-direction: column; flex: 1; min-width: 0; padding: 3px 0 2px 4px; font: 9px/13px Roboto, "Noto Sans", sans-serif; color: #111; }
.content input[type="text"], .combo, .content select.arrow, .color, .btn, .samplebar button {
  border: 1px solid #b4b4b4; border-radius: 2px; background: #fff;
}
.content input[type="text"] { padding: 0 4px; min-width: 0; }
select { appearance: none; border: 0; background: none; padding: 0; outline: 0; border-radius: 0; }
.combo { display: flex; align-items: center; gap: 2px; height: 20px; padding-left: 4px; margin-right: -4px; background: linear-gradient(#fdfdfd, #ececec); }
.combo.white { background: #fff; flex: 1; padding-left: 3px; }
.combo select { flex: 1; }
.combo svg { width: 14px; height: 14px; }
.mode { padding-left: 4px; }
.value { display: flex; align-items: center; gap: 5px; margin-top: 6px; }
.value label { width: 37px; white-space: nowrap; }
.content h3 { display: flex; align-items: center; gap: 7px; height: 22px; padding-left: 2px; font-weight: 700; margin-top: 1px; }
.content h3::before { content: ""; border: 5px solid transparent; border-top: 6px solid #444; border-bottom: 0; }
.sample { margin: 0 -4px 0 1px; padding: 4px 0 0 1px; border: 1px solid #d0d0d0; height: 87px; }
.preview { height: 60px; padding: 12px; background: #fff; border-bottom: 1px solid #999; color: #3232c0; font: 700 14px/16px "Liberation Sans", Arial, sans-serif; }
.samplebar { display: flex; height: 19px; padding-right: 4px; }
.samplebar input[type="text"] { flex: 1; padding: 0 2px; }
.samplebar button { display: grid; place-items: center; background: linear-gradient(#fdfdfd, #ececec); }
.reset { width: 21px; color: #d9803c; margin-left: 1px; }
.reset svg, .pick svg { width: 13px; height: 13px; }
select.arrow { padding: 0 4px; background: url("data:image/svg+xml,%3Csvg xmlns='http://www.w3.org/2000/svg' width='17' height='18'%3E%3Cpath d='M0 0h17v18H0z' fill='%23eee'/%3E%3Cpath d='M.5 0v18' stroke='%23bbb'/%3E%3Cpath d='M6 7h6l-3 4z' fill='%23666'/%3E%3C/svg%3E") right center no-repeat #fff !important; }
.samplebar select.arrow { width: 66px; margin: 0 6px 0 5px; }
.pick { width: 20px; }
.mini { width: 11px; margin-right: 6px; }
.mini::before { content: ""; border: 3px solid transparent; border-top: 4px solid #555; border-bottom: 0; }
.samplebar .swatch { width: 40px; margin-right: -8px; background: #fafafa; }
.split { display: flex; flex: 1; min-height: 0; gap: 1px; padding: 3px 0 4px 2px; }
.catbox { display: flex; flex-direction: column; flex: none; width: 97px; background: #fff; border-right: 1px solid #ccc; border-bottom: 1px solid #ccc; font-size: 10px; }
.cats { flex: 1; overflow: hidden; padding-top: 1px; font-family: "Open Sans", sans-serif; }
.cats li { display: flex; align-items: center; height: 19px; padding-left: 4px; gap: 6px; white-space: nowrap; }
.cats svg { width: 16px; height: 16px; }
.cats .cur { background: #efefef; }
.hscroll { display: flex; height: 13px; border-top: 1px solid #ddd; }
.hscroll .left, .hscroll .right { width: 12px; display: grid; place-items: center; }
.left::before { content: ""; border: 3px solid transparent; border-right: 4px solid #444; border-left: 0; }
.right::before { content: ""; border: 3px solid transparent; border-left: 4px solid #444; border-right: 0; }
.hscroll .thumb { flex: 1; background: #f6f6f6; }
.hscroll .rest { width: 9px; background: #ddd; }
.buffer { flex: 1; min-width: 0; padding-left: 2px; }
.buffer h4 { height: 13px; }
.enable { display: flex; align-items: center; gap: 12px; height: 29px; }
.row { display: flex; align-items: center; height: 27px; padding-left: 18px; }
.row > label:first-child:not(.chk), .row > span { width: 82px; flex: none; white-space: nowrap; }
.row > input[type="text"] { flex: 1; margin-right: -4px; height: 18px; }
.row .combo, .color { flex: 1; }
.row .combo.tall { height: 21px; }
.color { height: 19px; margin-right: -4px; background: linear-gradient(#fff, #f6f6f6); }
.row.short { height: 24px; }
.row.opacity { margin-bottom: 6px; }
.row.opacity input[type="text"] { flex: 0 0 72px; margin-left: 4px; }
input[type="range"] { appearance: none; flex: 1; min-width: 0; height: 12px; margin: 0; background: linear-gradient(#2f86c4, #2f86c4) 0 50% / 100% 4px no-repeat; }
input[type="range"]::-webkit-slider-thumb { appearance: none; width: 11px; height: 12px; background: #fff; border: 1px solid #aaa; border-radius: 2px; }
.buttons { display: flex; gap: 5px; height: 19px; }
.fill { flex: 1; }
.btn { width: 69px; background: linear-gradient(#fff, #eee); }
.btn.style { display: flex; align-items: center; justify-content: space-between; padding: 0 4px 0 17px; }
.btn.style::after { content: ""; border: 2px solid transparent; border-top: 3px solid #666; border-bottom: 0; }
.btn.primary { border-color: #5b9bd0; background: linear-gradient(#fff, #eaf2f9); }
.btn.last { width: 22px; margin-right: -8px; }
.arrows { position: absolute; left: 193px; top: 215px; width: 60px; height: 60px; }
.pointer { position: absolute; left: 275px; top: 18px; width: 10px; height: 17px; }
```
